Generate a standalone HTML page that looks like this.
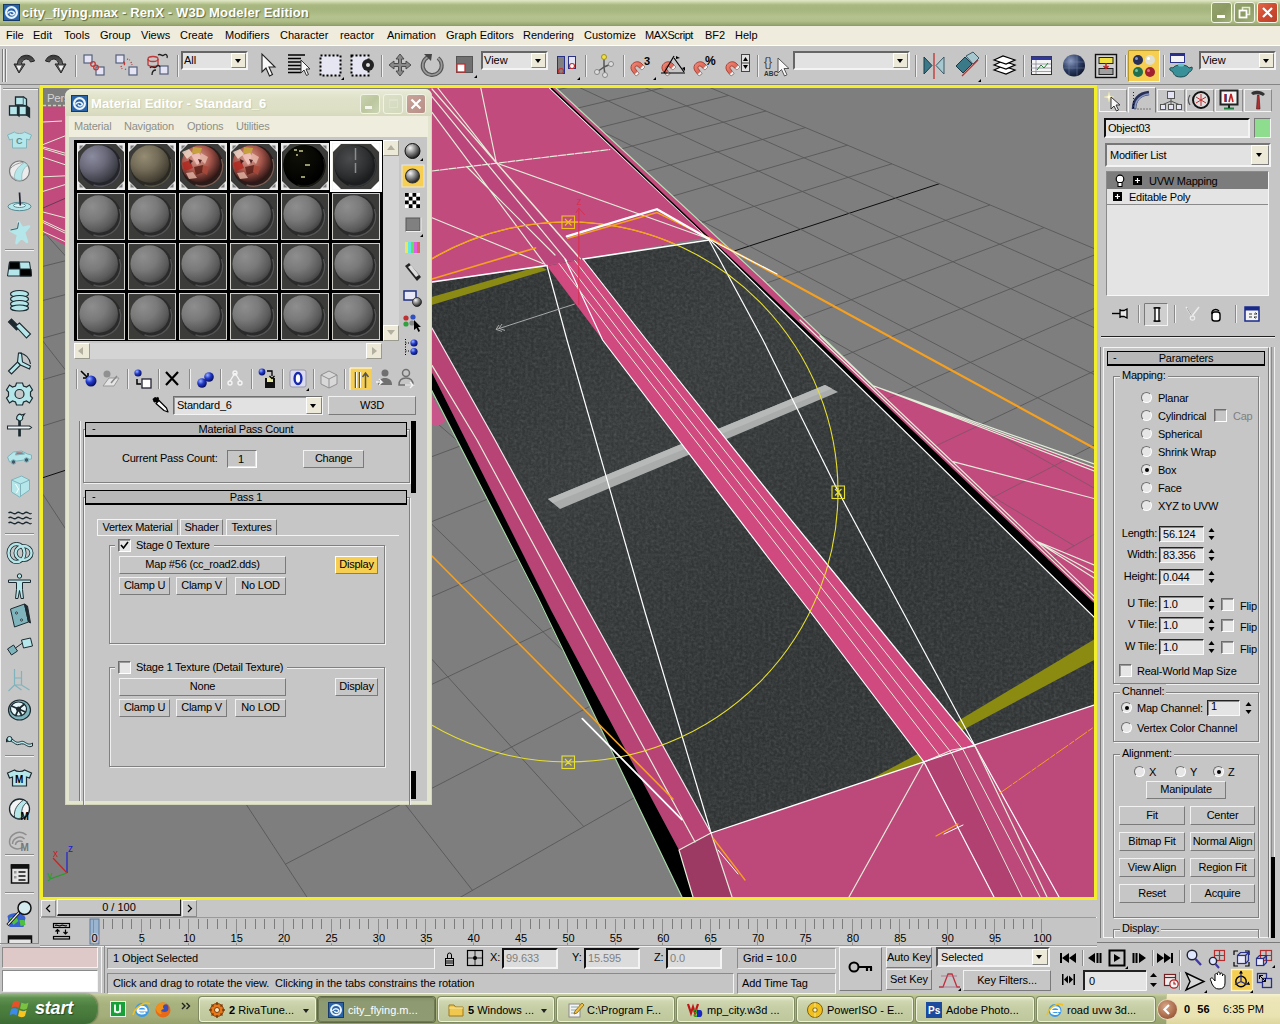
<!DOCTYPE html>
<html><head><meta charset="utf-8"><title>city_flying.max - RenX - W3D Modeler Edition</title>
<style>
*{box-sizing:border-box;margin:0;padding:0}
html,body{width:1280px;height:1024px;overflow:hidden;background:#c5c5c5;font-family:"Liberation Sans",sans-serif;font-size:11px;color:#000}
.a{position:absolute}
.t{position:absolute;white-space:nowrap;line-height:14px}
svg{position:absolute;overflow:visible}
#title{left:0;top:0;width:1280px;height:26px;background:linear-gradient(#e1e8c8 0,#cdd7ab 2px,#a8b880 5px,#a5b57d 9px,#b4c28f 17px,#b0be8a 21px,#9dac74 24px,#8a9a62 26px)}
#title .tt{left:22px;top:5px;font-weight:bold;font-size:13px;color:#fff;text-shadow:1px 1px 1px #5c6a3a;letter-spacing:.15px;line-height:16px}
.wb{position:absolute;top:2px;width:21px;height:21px;border:1px solid #f3f6e6;border-radius:3px;background:linear-gradient(135deg,#93a36b,#8b9b63 50%,#a0b078)}
.wb.cl{background:linear-gradient(135deg,#e0694a,#cf4a30 50%,#b8402c)}
#menu{left:0;top:26px;width:1280px;height:20px;background:#efecde;border-bottom:1px solid #fff}
#menu .t{top:2px;font-size:11px}
#tb{left:0;top:46px;width:1280px;height:39px;background:#c6c6c6}
.sep{position:absolute;width:2px;border-left:1px solid #8a8a8a;border-right:1px solid #e8e8e8}
.dd{position:absolute;background:#e2e2e2;border:1px solid;border-color:#6e6e6e #f4f4f4 #f4f4f4 #6e6e6e;box-shadow:inset 1px 1px 0 #9a9a9a}
.dd .t{left:4px;top:1px;font-size:11px}
.dd .ar{position:absolute;right:0;top:0;bottom:0;width:16px;background:#ece9d8;border:1px solid;border-color:#fff #808080 #808080 #fff}
.dd .ar:after{content:"";position:absolute;left:50%;margin-left:-4px;top:50%;margin-top:-2px;border:3.5px solid transparent;border-top:4px solid #000;border-bottom:0}
.btn{position:absolute;background:#c6c6c6;border:1px solid;border-color:#f2f2f2 #7a7a7a #7a7a7a #f2f2f2;text-align:center;font-size:11px;line-height:15px;white-space:nowrap}
.sunk{position:absolute;border:1px solid;border-color:#6e6e6e #f4f4f4 #f4f4f4 #6e6e6e}
.grp{position:absolute;border:1px solid;border-color:#7c7c7c #f2f2f2 #f2f2f2 #7c7c7c;box-shadow:inset 1px 1px 0 #f2f2f2,1px 1px 0 #7c7c7c}
.grp{border-color:#808080;box-shadow:inset 1px 1px 0 #f0f0f0,1px 1px 0 #f0f0f0}
.rh{position:absolute;height:15px;background:#b8b8b8;border:1px solid #000;border-width:1px 1px 2px 1px;text-align:center;font-size:11px;line-height:13px;white-space:nowrap}
.rh .mn{position:absolute;left:6px;top:-1px}
.tab{position:absolute;height:17px;border:1px solid;border-color:#f4f4f4 #7a7a7a transparent #f4f4f4;text-align:center;line-height:15px;font-size:11px;white-space:nowrap}
.cb{position:absolute;width:13px;height:13px;background:#e6e6e6;border:1px solid;border-color:#6e6e6e #fff #fff #6e6e6e;box-shadow:inset 1px 1px 0 #9a9a9a}
.rb{position:absolute;width:11px;height:11px;border-radius:50%;background:#e6e6e6;border:1px solid;border-color:#6e6e6e #fff #fff #6e6e6e}
.rb.on:after{content:"";position:absolute;left:2.5px;top:2.5px;width:4px;height:4px;border-radius:50%;background:#000}
#me,#cp{letter-spacing:-.22px}
</style></head><body>
<div id="title" class="a">
<svg style="left:3px;top:4px" width="17" height="17" viewBox="0 0 17 17"><rect width="17" height="17" fill="#173a6a"/><rect x="1" y="1" width="15" height="15" fill="#2a63a6"/><circle cx="8.5" cy="8.5" r="5.4" fill="none" stroke="#e8f4ff" stroke-width="2.2"/><path d="M4.5 9.5c1.5-3 6-3 7 0c-1 2-4 2-4.5 0" fill="none" stroke="#e8f4ff" stroke-width="1.6"/></svg>
<div class="t tt">city_flying.max - RenX - W3D Modeler Edition</div>
<div class="wb" style="left:1211px"><div class="a" style="left:5px;top:12px;width:8px;height:3px;background:#fff"></div></div>
<div class="wb" style="left:1234px"><svg style="left:3px;top:3px" width="13" height="13"><path d="M4.5 4V1.5h7v7H9" fill="none" stroke="#e6ecd2" stroke-width="1.6"/><rect x="1.5" y="4.5" width="7" height="7" fill="none" stroke="#fff" stroke-width="1.8"/></svg></div>
<div class="wb cl" style="left:1257px"><svg style="left:3px;top:3px" width="13" height="13"><path d="M2 2l9 9M11 2l-9 9" stroke="#fff" stroke-width="2.2"/></svg></div>
</div>
<div id="menu" class="a">
<div class="t" style="left:6px">File</div>
<div class="t" style="left:33px">Edit</div>
<div class="t" style="left:64px">Tools</div>
<div class="t" style="left:100px">Group</div>
<div class="t" style="left:141px">Views</div>
<div class="t" style="left:180px">Create</div>
<div class="t" style="left:225px">Modifiers</div>
<div class="t" style="left:280px">Character</div>
<div class="t" style="left:340px">reactor</div>
<div class="t" style="left:387px">Animation</div>
<div class="t" style="left:446px">Graph Editors</div>
<div class="t" style="left:523px">Rendering</div>
<div class="t" style="left:584px">Customize</div>
<div class="t" style="left:645px;letter-spacing:-.45px">MAXScript</div>
<div class="t" style="left:705px">BF2</div>
<div class="t" style="left:735px">Help</div>
</div>
<div id="tb" class="a"></div><div class="a" style="left:0;top:84px;width:1280px;height:1px;background:#858585"></div>
<svg style="left:0;top:46px" width="1280" height="39" viewBox="0 46 1280 39" font-family="Liberation Sans,sans-serif">
<defs><linearGradient id="ug" x1="0" y1="0" x2="0" y2="1"><stop offset="0" stop-color="#333"/><stop offset="1" stop-color="#999"/></linearGradient>
<radialGradient id="sph" cx=".35" cy=".3" r=".75"><stop offset="0" stop-color="#8a9ac0"/><stop offset=".6" stop-color="#2a3a60"/><stop offset="1" stop-color="#10182c"/></radialGradient>
<linearGradient id="mg" x1="0" y1="0" x2="1" y2="1"><stop offset="0" stop-color="#f09080"/><stop offset="1" stop-color="#d04030"/></linearGradient></defs>
<path d="M2.500 49v33M5.500 49v33" stroke="#7a7a7a"/><path d="M3.500 49v33M6.500 49v33" stroke="#f0f0f0"/>
<g stroke="#8a8a8a"><path d="M75.500 55v22M177.500 55v22M381.500 55v22M585.500 55v22M623.500 55v22M757.500 55v22M915.500 55v22M985.500 55v22M1023.500 55v22M1125.500 55v22M1163.500 55v22"/></g>
<g stroke="#f0f0f0"><path d="M76.500 55v22M178.500 55v22M382.500 55v22M586.500 55v22M624.500 55v22M758.500 55v22M916.500 55v22M986.500 55v22M1024.500 55v22M1126.500 55v22M1164.500 55v22"/></g>
<!-- undo / redo -->
<path d="M19 73l-5-9h3.500c0-10 14-12 17-3l-4 1c-2-5-9-3-9 2h3.500z" fill="url(#ug)" stroke="#222" stroke-width="1"/><path d="M15.500 65h7l-3.500 7z" fill="#f0f0f0" stroke="#222" stroke-width=".8"/>
<path d="M61 73l5-9h-3.500c0-10-14-12-17-3l4 1c2-5 9-3 9 2h-3.500z" fill="url(#ug)" stroke="#222" stroke-width="1"/><path d="M64.500 65h-7l3.500 7z" fill="#f0f0f0" stroke="#222" stroke-width=".8"/>
<!-- link -->
<g fill="#e4e4f4" stroke="#55607a" stroke-width="1.200"><rect x="84" y="55" width="8" height="8"/><rect x="96" y="67" width="8" height="8"/><rect x="116" y="55" width="8" height="8"/><rect x="129" y="67" width="8" height="8"/><rect x="160" y="66" width="8" height="8"/></g>
<g fill="none" stroke="#c03838" stroke-width="1.300"><circle cx="93" cy="64" r="2.300"/><circle cx="96" cy="67.500" r="2.300"/><path d="M123 62c2 0 2 2 1 3" /><path d="M127 59l3 1M131 62l1 3M121 66l1 3M125 69l2 1" stroke-dasharray="1.200 1.200"/><ellipse cx="153" cy="59" rx="5" ry="2.500"/><path d="M148 59v6c2 2 8 2 10 0v-6"/></g>
<path d="M158 55c3-2 4 2 6 0s4 1 3 3M150 68c2-3 4 1 6-1s3-2 4 0M152 75c0-4 2-5 4-5" fill="none" stroke="#222" stroke-width="1.300"/>
<!-- select arrow -->
<path d="M262 54v18l4-4l3.500 8l3-1.500l-3.500-7.500h6z" fill="#f8f8f8" stroke="#222" stroke-width="1.100"/>
<path d="M288 55h17M288 58.500h13M288 62h13M288 65.500h13M288 69h13M288 72.500h13" stroke="#000" stroke-width="1.300"/><path d="M301 60v13l3-3l2.500 5.500l2-1l-2.500-5.500h4z" fill="#f8f8f8" stroke="#333" stroke-width="1"/>
<rect x="320.500" y="55.500" width="20" height="20" fill="#e6e6f2" stroke="#000" stroke-width="2" stroke-dasharray="2 2"/><path d="M341 80l3 0l0-3z" fill="#000"/>
<rect x="351.500" y="55.500" width="17" height="20" fill="#e6e6f2" stroke="#000" stroke-width="2" stroke-dasharray="2 2"/><circle cx="368" cy="65" r="6" fill="#222"/><circle cx="368" cy="65" r="2" fill="#ddd"/>
<!-- move -->
<path d="M400 54l4 5h-2.500v4.500h4.500v-2.500l5 4l-5 4v-2.500h-4.500v4.500h2.500l-4 5l-4-5h2.500v-4.500h-4.500v2.500l-5-4l5-4v2.500h4.500v-4.500h-2.500z" fill="#8a8a8a" stroke="#444" stroke-width=".9"/>
<path d="M438 58a9.500 9.500 0 1 1-10 -1" fill="none" stroke="#555" stroke-width="4"/><path d="M438 58a9.500 9.500 0 1 1-10 -1" fill="none" stroke="#9a9a9a" stroke-width="1.600"/><path d="M424 54l8 0l-1 7z" fill="#444"/>
<rect x="456.500" y="56.500" width="16" height="16" fill="#707070" stroke="#555"/><rect x="457" y="64" width="8" height="8" fill="#fff" stroke="#c03030" stroke-width="1.300"/><path d="M474 78l3 0l0-3z" fill="#000"/>
<!-- pivot -->
<rect x="557.500" y="56.500" width="7" height="17" fill="#808080" stroke="#283088"/><rect x="568.500" y="56.500" width="7" height="12" fill="#e4e4f4" stroke="#283088"/><circle cx="561" cy="71" r="2.500" fill="none" stroke="#c03030" stroke-width="1.200"/><circle cx="572" cy="66" r="2.500" fill="#fff" stroke="#c03030" stroke-width="1.200"/><path d="M577 80l3 0l0-3z" fill="#000"/>
<path d="M604 57v10M604 67l-7 5M604 67l7 -3M604 67l1 8" stroke="#555" stroke-width="1.500"/><circle cx="604" cy="57" r="2.500" fill="#f0e040" stroke="#a09020"/><circle cx="597" cy="72" r="2.500" fill="#ddd" stroke="#888"/><circle cx="611" cy="64" r="2.500" fill="#ddd" stroke="#888"/><circle cx="605" cy="75" r="2.500" fill="#ddd" stroke="#888"/>
<!-- snaps (magnets) -->
<g id="mag"><path d="M636 76l-4-5c-4-6 4-12 9-8l4 4l-3 3l-4-3.500c-2-1.500-4 .5-2.500 2.500l3.500 4.500z" fill="url(#mg)" stroke="#a03020" stroke-width=".8"/><path d="M636 76l3-2.500l-1.500-2l-3 2.500zM645 67l-3 3l-1.800-1.800l3-3z" fill="#f4f4f4" stroke="#888" stroke-width=".6"/></g>
<use href="#mag" x="31"/><use href="#mag" x="63"/><use href="#mag" x="95"/>
<text x="644" y="65" font-size="11" font-weight="bold">3</text><path d="M653 80l3 0l0-3z" fill="#000"/>
<path d="M661 73h24M664 73l10-17M674 58l10 14" stroke="#000" stroke-width="1.200" fill="none"/><path d="M676 56l4 2l-4 1zM685 71l-3-3l3-1z" fill="#000"/>
<text x="705" y="65" font-size="12" font-weight="bold">%</text>
<rect x="741.500" y="54.500" width="8" height="17" fill="#e0e0e0" stroke="#444"/><path d="M743 61l2.500-4l2.500 4zM743 65l2.500 4l2.500-4z" fill="#000"/><path d="M742 63h7" stroke="#444"/>
<text x="764" y="66" font-size="12" fill="#444">{}</text><text x="764" y="76" font-size="6.500" font-weight="bold" fill="#333">ABC</text><path d="M778 58v15l3.500-3.500l3 6.500l2.500-1.200l-3-6.300h5z" fill="#f8f8f8" stroke="#555" stroke-width="1"/>
<!-- mirror, align -->
<path d="M924 57v17l8-8.500z" fill="#3a7a88" stroke="#1a3a48"/><path d="M944 57v17l-8-8.500z" fill="#a8c8d0" stroke="#3a5a68"/><path d="M934 53v26" stroke="#c03030" stroke-width="1.300"/>
<path d="M956 66l9-9l7 7l-9 9z" fill="#3a7a88" stroke="#1a3a48"/><path d="M966 56l7-4l6 6l-6 6z" fill="#a8c8d0" stroke="#3a5a68"/><path d="M962 76l16-16" stroke="#c03030" stroke-width="1.300"/><path d="M978 82l3 0l0-3z" fill="#000"/>
<g fill="#fff" stroke="#000" stroke-width="1.200"><path d="M994 70l9-4l12 4l-9 4z"/><path d="M994 65l9-4l12 4l-9 4z"/><path d="M994 60l9-4l12 4l-9 4z"/></g>
<rect x="1031.500" y="56.500" width="20" height="18" fill="#f4f4f4" stroke="#333"/><rect x="1031.500" y="56.500" width="20" height="3.500" fill="#3038a0"/><path d="M1036 60v14M1031 64h20M1031 68h20M1031 71.500h20" stroke="#889" stroke-width=".8"/><path d="M1037 70l4-5l3 3l4-5" stroke="#208030" fill="none"/>
<circle cx="1074" cy="65.500" r="11" fill="url(#sph)"/><path d="M1064 62h20M1063.500 68h21M1069 56v20M1077 55v21" stroke="#8090b0" stroke-width=".6" opacity=".7"/>
<rect x="1095.500" y="54.500" width="21" height="23" fill="#d0d0d0" stroke="#111" stroke-width="1.400"/><rect x="1099" y="57.500" width="14" height="6" fill="#f0e040" stroke="#222"/><rect x="1099" y="68.500" width="14" height="6" fill="#a0a0a0" stroke="#222"/><path d="M1106 63v5M1103.500 66l2.500 2.500l2.500-2.500" stroke="#c02020" stroke-width="1.500" fill="none"/>
<rect x="1128.500" y="50.500" width="31" height="31" fill="#f6cf52" stroke="#fff6d0"/><path d="M1128.500 81.500v-31h31" fill="none" stroke="#b89828"/>
<circle cx="1138" cy="60" r="5" fill="#283058"/><circle cx="1150" cy="60" r="5" fill="#e0e0d0"/><circle cx="1138" cy="72" r="5" fill="#207050"/><circle cx="1150" cy="72" r="5" fill="#a02030"/><circle cx="1136.500" cy="58.500" r="1.500" fill="#8898c8"/><circle cx="1148.500" cy="58.500" r="1.500" fill="#fff"/><circle cx="1136.500" cy="70.500" r="1.500" fill="#70c0a0"/><circle cx="1148.500" cy="70.500" r="1.500" fill="#e07080"/>
<rect x="1170.500" y="53.500" width="14" height="9" fill="#f4f4f4" stroke="#283088"/><rect x="1170.500" y="53.500" width="14" height="2.500" fill="#283088"/><path d="M1173 68c-2-1-4 0-3 2l3 2c1 4 4 5 8 5s7-2 8-5c2 0 4-3 3-5l-3 1c-1-2-4-3-8-3s-7 1-8 3z" fill="#3a9098" stroke="#184048" stroke-width=".9"/><ellipse cx="1181" cy="65" rx="3" ry="1.500" fill="#70c0c8"/>
</svg>
<div class="dd" style="left:181px;top:51px;width:67px;height:19px;border-width:2px;border-color:#666 #f4f4f4 #f4f4f4 #666;box-shadow:none"><div class="t" style="left:1px;top:0">All</div><div class="ar" style="width:15px"></div></div>
<div class="dd" style="left:481px;top:51px;width:67px;height:19px;border-width:2px;border-color:#666 #f4f4f4 #f4f4f4 #666;box-shadow:none"><div class="t" style="left:1px;top:0">View</div><div class="ar" style="width:15px"></div></div>
<div class="dd" style="left:793px;top:51px;width:117px;height:19px;border-width:2px;border-color:#666 #f4f4f4 #f4f4f4 #666;box-shadow:none"><div class="ar" style="width:15px"></div></div>
<div class="dd" style="left:1199px;top:51px;width:77px;height:19px;border-width:2px;border-color:#666 #f4f4f4 #f4f4f4 #666;box-shadow:none"><div class="t" style="left:1px;top:0">View</div><div class="ar" style="width:15px"></div></div>
<div class="a" style="left:0;top:85px;width:40px;height:860px;background:#c6c6c6"></div>
<div class="a" style="left:0;top:85px;width:1px;height:860px;background:#f0f0f0"></div>
<div class="a" style="left:38px;top:88px;width:1px;height:856px;background:#8a8a8a"></div>
<div class="a" style="left:3px;top:88px;width:35px;height:1px;background:#8a8a8a"></div>
<div class="a" style="left:3px;top:89px;width:35px;height:1px;background:#f4f4f4"></div>
<div class="a" style="left:0;top:943px;width:39px;height:1px;background:#8a8a8a"></div>
<svg style="left:0;top:85px" width="40" height="860" viewBox="0 85 40 860">
<defs><clipPath id="lc"><rect x="0" y="85" width="40" height="858"/></clipPath></defs><g clip-path="url(#lc)">
<g transform="translate(19.500,108)"><g stroke="#1c2a30" stroke-width="1.300" fill="#b4e6ea"><path d="M-4-11h8v8h-8z"/><path d="M4-11l3 2v8l-3-2"/><path d="M-10-2h8v9h-8z"/><path d="M-1-2h8v9h-8z"/><path d="M7-2l3 2v9l-3-2z" fill="#1c2a30"/><path d="M-2-2l1.500 1v9l-1.500-1" fill="#1c2a30"/></g></g>
<g transform="translate(19.500,140)"><g stroke="#7fb4bc" stroke-width="1" fill="#b4e6ea"><path d="M-5-8l-7 3l2 5l3-1v9h14v-9l3 1l2-5l-7-3c-2 2-8 2-10 0z"/></g><text x="-3.500" y="4" font-size="9" font-weight="bold" fill="#5a8a94" font-family="Liberation Sans,sans-serif">C</text></g>
<g transform="translate(19.500,171)"><circle r="10" fill="#ececec" stroke="#7a7a7a" stroke-width="1.200"/><path d="M5-8.500c-7 4-11 10-10 16c2.500 2 5 2.500 7.500 1.500c-1-6 1-12 6-15z" fill="#b4e6ea" stroke="#8aa" stroke-width=".6"/><path d="M-9.500-2c3-4 8-6 13-6.500" stroke="#999" fill="none"/><path d="M-8 5c0 0 3 4 8 5" stroke="#aaa" fill="none"/></g>
<g transform="translate(19.500,202)"><g stroke="#5a8a92" stroke-width="1" fill="#b4e6ea"><ellipse cx="0" cy="4.500" rx="11.500" ry="4.200"/><ellipse cx="0" cy="3.500" rx="6" ry="2" fill="#dff6f8"/></g><path d="M0-9.500l.8 13" stroke="#223" stroke-width="1.700"/></g>
<g transform="translate(19.500,232)"><path d="M-1-10l3.500 6l7-1.500l-5 6l3 9.500l-5.500-4.500l-5 5.500l1.500-8.500l-7.500-4l7.500-1.500z" fill="#b4e6ea" stroke="#b4e6ea" stroke-width="2.600" stroke-linejoin="round"/><path d="M-9-2l7-1.500l1-6" stroke="#3a5a62" stroke-width="1" fill="none"/></g>
<g transform="translate(19.500,269)"><g stroke="#1c2a30" stroke-width="1"><path d="M-10-7h20l2 14h-24z" fill="#b4e6ea"/><path d="M-10-7h10l.5 7h-11z" fill="#000"/><path d="M.5 0h11l.5 7h-11.500z" fill="#000"/></g></g>
<g transform="translate(19.500,300)"><g stroke="#1c2a30" stroke-width="1.200" fill="none"><ellipse cx="0" cy="-6" rx="9" ry="3.500" fill="#b4e6ea"/><ellipse cx="0" cy="-1" rx="9" ry="3.500" fill="#b4e6ea"/><ellipse cx="0" cy="4" rx="9" ry="3.500" fill="#b4e6ea"/><ellipse cx="0" cy="8" rx="9" ry="3" fill="#b4e6ea"/></g></g>
<g transform="translate(19.500,331)"><g stroke="#1c2a30" stroke-width="1.100" fill="#b4e6ea"><path d="M-11-9l3-3l8 8l-3 3z" fill="#1c2a30"/><path d="M-4-5l4-3l11 11l-4 4z"/></g></g>
<g transform="translate(19.500,363)"><g stroke="#1c2a30" stroke-width="1.100" fill="#b4e6ea"><path d="M-11 8l9-9l3 3l-9 9z"/><path d="M-2-1l1-9l3 0l1 9l8 4l-1 3l-9-4z"/><path d="M0-10c6 1 10 5 11 11" fill="none"/></g></g>
<g transform="translate(19.500,394)"><g stroke="#1c2a30" stroke-width="1.200" fill="#b4e6ea"><path d="M-3-11h6l1 3l3 1l3-2l3 5l-2 2v4l2 2l-3 5l-3-2l-3 1l-1 3h-6l-1-3l-3-1l-3 2l-3-5l2-2v-4l-2-2l3-5l3 2l3-1z"/><circle r="4.500" fill="#c6c6c6"/></g></g>
<g transform="translate(19.500,425)"><g stroke="#1c2a30" stroke-width="1.100" fill="#b4e6ea"><path d="M-.7-6h1.500v17h-1.500z" fill="#1c2a30"/><path d="M-12 1h22l2 1.500l-2 1.500h-22z" fill="#f4f4f4"/><path d="M-3-6c0-4 3-6 5-4l3-1l-2 3c1 2-1 4-3 4z"/></g></g>
<g transform="translate(19.500,456)"><g stroke="#7fb4bc" stroke-width="1" fill="#b4e6ea"><path d="M-12 1l6-5l8-1l6 3l4 1v4l-22 3z"/><circle cx="-6" cy="6" r="2.200" fill="#456"/><circle cx="7" cy="4" r="2.200" fill="#456"/><path d="M-3-4l5 0l3 2l-9 1z" fill="#d06060"/></g></g>
<g transform="translate(19.500,487)"><g stroke="#7fb4bc" stroke-width="1" fill="#b4e6ea"><path d="M-8-7l10-4l8 4v10l-10 7l-8-5z"/><path d="M-8-7l9 4l9-4M1-3v13" fill="none"/><path d="M-4-3l3 5l-2 4" fill="none" stroke="#fff"/></g></g>
<g transform="translate(19.500,518)"><g stroke="#1c2a30" stroke-width="1.300" fill="none"><path d="M-11-5c3-3 5 3 8 0s5 3 8 0s5 3 7 0M-11 0c3-3 5 3 8 0s5 3 8 0s5 3 7 0M-11 5c3-3 5 3 8 0s5 3 8 0s5 3 7 0"/></g></g>
<g transform="translate(19.500,553)"><g stroke="#1c2a30" stroke-width="1.200" fill="none"><ellipse cx="-3" cy="0" rx="8" ry="9" stroke="#1c2a30" stroke-width="4"/><ellipse cx="4" cy="0" rx="8" ry="7" stroke="#1c2a30" stroke-width="4"/><ellipse cx="-3" cy="0" rx="8" ry="9" stroke="#b4e6ea" stroke-width="2.400"/><ellipse cx="4" cy="0" rx="8" ry="7" stroke="#b4e6ea" stroke-width="2.400"/></g></g>
<g transform="translate(19.500,586)"><g stroke="#1c2a30" stroke-width="1" fill="#b4e6ea"><circle cx="0" cy="-10" r="2.200"/><path d="M-11-6h22v2.500h-8v7l1 9h-2.500l-1.500-8l-1.500 8h-2.500l1-9v-7h-8z"/></g></g>
<g transform="translate(19.500,616)"><g stroke="#1c2a30" stroke-width="1" fill="#7fb4bc"><path d="M-9-7l14-5l4 18l-14 5z"/><path d="M5-12l3 2l3 17l-2 -1z" fill="#1c2a30"/><circle cx="-3" cy="-3" r="1" fill="#fff"/><circle cx="2" cy="4" r="1" fill="#fff"/></g></g>
<g transform="translate(19.500,648)"><g stroke="#1c2a30" stroke-width="1" fill="#b4e6ea"><path d="M-12 1l6-4l4 6l-6 4z" fill="#7fb4bc"/><path d="M2-8l9-2l2 8l-9 2z"/><path d="M-4 0l7-5" fill="none"/></g></g>
<g transform="translate(19.500,680)"><g stroke="#7fb4bc" stroke-width="1.200" fill="none"><path d="M-5-11v16M2-9v14M-5 5l-6 6M2 5l8 5M-5 5h7M-5-2h7M-5 5l7 5"/></g></g>
<g transform="translate(19.500,710)"><g stroke="#1c2a30" stroke-width="1.200" fill="#7fb4bc"><ellipse cx="0" cy="0" rx="11" ry="10"/><ellipse cx="-1" cy="-1" rx="8" ry="7" fill="#e8f8fa"/><path d="M-1-1l-7-3M-1-1l6-5M-1-1l7 3M-1-1l-3 7M-1-1l3 6" stroke-width="1.800"/><circle cx="-1" cy="-1" r="2" fill="#1c2a30"/></g></g>
<g transform="translate(19.500,742)"><g stroke="#1c2a30" stroke-width="1" fill="#b4e6ea"><path d="M-13-3c4-3 7 2 10 3s5-2 8 0s5 3 8 1l0 3c-4 2-6-1-9-2s-5 2-8 0s-5-4-9-2z"/><circle cx="-10" cy="-3" r="2.500"/></g></g>
<g transform="translate(19.500,778)"><g stroke="#1c2a30" stroke-width="1.200" fill="#b4e6ea"><path d="M-5-8l-7 3l2 5l3-1v9h14v-9l3 1l2-5l-7-3c-2 2-8 2-10 0z"/></g><text x="-4.500" y="5" font-size="10" font-weight="bold" fill="#000" font-family="Liberation Sans,sans-serif">M</text></g>
<g transform="translate(19.500,809)"><circle r="10" fill="#f4f4f4" stroke="#1c2a30" stroke-width="1.300"/><path d="M4-9c-6 4-10 10-9 17c3 2 5 2 8 0c-2-6 0-12 5-15z" fill="#b4e6ea" stroke="#1c2a30" stroke-width=".8"/><text x="1" y="11" font-size="10" font-weight="bold" fill="#000" font-family="Liberation Sans,sans-serif">M</text></g>
<g transform="translate(19.500,840)"><g stroke="#8e8e8e" stroke-width="1.500" fill="none"><path d="M-10 2c0-8 10-13 17-7M-7 4c0-6 8-9 12-5M-4 5c0-4 5-5 7-3"/><path d="M-10 2c0 6 8 9 14 5"/></g><text x="1" y="11" font-size="10" font-weight="bold" fill="#777" font-family="Liberation Sans,sans-serif">M</text></g>
<g transform="translate(19.500,874)"><g stroke="#111" stroke-width="1.500" fill="#e4e4e4"><rect x="-8" y="-9" width="17" height="18"/><rect x="-8" y="-9" width="17" height="3" fill="#111"/><path d="M-1-2h7M-1 2h7M-1 6h7" stroke-width="1.300"/><rect x="-5.500" y="-3" width="2.500" height="2.500" fill="#999" stroke="none"/><rect x="-5.500" y="2" width="2.500" height="2.500" fill="#999" stroke="none"/></g></g>
<g transform="translate(19.500,914)"><path d="M-12 2c6-5 16-3 18 2l-2 9h-14z" fill="#3a60d0"/><path d="M-10 4l6-2l3 5l-5 4zM0 6l5 0l1 5l-5 1z" fill="#50c040"/><path d="M-12 11l12-13" stroke="#111" stroke-width="3"/><path d="M-11.500 10.500l11-12" stroke="#eee" stroke-width="1.200"/><circle cx="5" cy="-6" r="6.500" fill="#d4ecf0" stroke="#111" stroke-width="1.500"/></g>
<g transform="translate(19.500,940)"><g><rect x="-11" y="-4" width="23" height="9" fill="#e4e4e4" stroke="#111" stroke-width="1.500"/><rect x="-11" y="-4" width="23" height="3.500" fill="#111"/></g></g>
<path d="M5 249.5h29" stroke="#8a8a8a"/><path d="M5 250.5h29" stroke="#f4f4f4"/>
<path d="M5 533.5h29" stroke="#8a8a8a"/><path d="M5 534.5h29" stroke="#f4f4f4"/>
<path d="M5 755.5h29" stroke="#8a8a8a"/><path d="M5 756.5h29" stroke="#f4f4f4"/>
<path d="M5 854.5h29" stroke="#8a8a8a"/><path d="M5 855.5h29" stroke="#f4f4f4"/>
<path d="M5 892.5h29" stroke="#8a8a8a"/><path d="M5 893.5h29" stroke="#f4f4f4"/>
</g></svg>
<div class="a" style="left:40px;top:85px;width:1057px;height:815px;background:#f2ee2c"></div>
<svg style="left:43px;top:88px" width="1051" height="809" viewBox="43 88 1051 809"><defs><clipPath id="vc"><rect x="43" y="88" width="1051" height="809"/></clipPath>
<filter id="nz" x="0" y="0" width="100%" height="100%"><feTurbulence type="fractalNoise" baseFrequency="0.35" numOctaves="2" seed="3" result="n"/><feColorMatrix in="n" type="matrix" values="0 0 0 0 .55  0 0 0 0 .57  0 0 0 0 .57  .9 .9 .9 0 -1.05" result="m"/><feComposite in="m" in2="SourceGraphic" operator="in"/></filter>
<linearGradient id="rg" x1="0" y1="0" x2="1" y2="1"><stop offset="0" stop-color="#2b2f30"/><stop offset=".3" stop-color="#363a3b"/><stop offset=".6" stop-color="#2f3334"/><stop offset="1" stop-color="#323637"/></linearGradient>
<clipPath id="tri"><polygon points="874,386 1094,467 1094,607 1088,600"/></clipPath></defs><g clip-path="url(#vc)">
<rect x="43" y="88" width="1051" height="809" fill="#7e7e7e"/>
<g id="gridlines" stroke-width="0.9" fill="none"><path d="M659.8 66.6L-121.1 244.0" stroke="#585858"/><path d="M693.3 80.6L-104.0 270.1" stroke="#585858"/><path d="M728.6 95.4L-85.5 298.4" stroke="#585858"/><path d="M765.9 111.0L-65.5 328.9" stroke="#585858"/><path d="M805.5 127.6L-43.8 362.0" stroke="#585858"/><path d="M847.4 145.2L-20.2 398.0" stroke="#585858"/><path d="M892.0 163.8L5.7 437.4" stroke="#585858"/><path d="M939.4 183.7L34.0 480.6" stroke="#000"/><path d="M990.0 204.9L65.2 528.2" stroke="#585858"/><path d="M1044.1 227.6L99.7 580.9" stroke="#585858"/><path d="M1102.1 251.9L138.2 639.7" stroke="#585858"/><path d="M1164.3 278.0L181.4 705.5" stroke="#585858"/><path d="M1231.4 306.1L230.1 779.8" stroke="#585858"/><path d="M1303.8 336.4L285.4 864.2" stroke="#585858"/><path d="M1382.3 369.3L348.9 961.1" stroke="#585858"/><path d="M659.8 66.6L1382.3 369.3" stroke="#585858"/><path d="M618.5 75.9L1339.1 394.0" stroke="#585858"/><path d="M575.5 85.7L1293.1 420.4" stroke="#585858"/><path d="M530.7 95.9L1244.0 448.5" stroke="#585858"/><path d="M484.0 106.5L1191.3 478.6" stroke="#585858"/><path d="M435.3 117.6L1134.9 511.0" stroke="#585858"/><path d="M384.4 129.1L1074.1 545.8" stroke="#585858"/><path d="M331.2 141.2L1008.5 583.3" stroke="#585858"/><path d="M275.6 153.8L937.6 624.0" stroke="#585858"/><path d="M217.3 167.1L860.5 668.1" stroke="#585858"/><path d="M156.2 181.0L776.6 716.2" stroke="#585858"/><path d="M92.0 195.5L684.7 768.8" stroke="#585858"/><path d="M24.6 210.9L583.8 826.6" stroke="#585858"/><path d="M-46.4 227.0L472.5 890.4" stroke="#585858"/><path d="M-121.1 244.0L348.9 961.1" stroke="#585858"/></g>
<!-- left strip pink -->
<polygon points="43,106.500 66,106.500 66,246 43,233" fill="#c14b7d"/>
<!-- top pink region + right strip + right triangle -->
<polygon points="430,88 556,88 767.500,284 784,300 874,386.700 1094,467 1094,604 709,237 583,259 547,266 430,283" fill="#c14b7d"/>
<!-- road -->
<polygon points="430,283 547,266 583,259 709,239 1094,616 1094,705 711,833 589,612 495,440 430,324.500" fill="url(#rg)"/>
<polygon points="430,283 547,266 583,259 709,239 1094,616 1094,705 711,833 589,612 495,440 430,324.500" fill="#888" filter="url(#nz)" opacity=".16"/>
<!-- right black band -->
<polygon points="709,237 1094,603 1094,616.500 709,239" fill="#000"/>
<!-- bottom pink -->
<polygon points="711,833 1094,705 1094,897 694,897 679,850" fill="#bc497a"/>
<!-- left curb -->
<polygon points="430,324.500 432,328 495,440 589,612 711,833 679,850 552,612 465.800,440 430,368.700" fill="#b84476"/>
<polygon points="679,850 711,833 732,897 693,897" fill="#9c3a64"/>
<!-- left black band -->
<polygon points="430,368.700 465.800,440 552,612 679,850 693,897 682,897 538.400,600 457,440 430,386.900" fill="#000"/><polygon points="430,392 446,421 438,426 430,424" fill="#c9568a"/>
<!-- yellow stripes -->
<polygon points="430,297.500 430,305.500 547,270 540,266" fill="#8a8a14"/>
<polygon points="867,781 924,762 924,750 962,718.500 1094,639.500 1094,660" fill="#8b8b12"/>
<!-- white road marking -->
<polygon points="548,499 825,385 838,392 560,509" fill="#a9acab"/>
<polygon points="548,499 825,385 832,388.500 553,503" fill="#b6b9b8"/>
<!-- median -->
<polygon points="547,266 583,259 646.500,340 770,494 866,612 975,746 924,762 810.500,612 770,560 602.600,340" fill="#d04a80"/>
<polygon points="924,762 952,750 1022,897 994,897" fill="#b04170"/>
<!-- darker median continuation in top pink -->
<polygon points="430,95 430,110 545,265 567,261 580,259" fill="#bb467b"/>
<!-- grid over right pink triangle -->
<g clip-path="url(#tri)" opacity=".55" stroke="#3c3c3c" stroke-width=".9" fill="none"><use href="#gridlines"/></g>
<!-- wireframe light lines -->
<g stroke="#e4ecda" stroke-width="1.200" fill="none" stroke-linecap="round">
<path d="M432 89L578.4 257M432 96.700L566.700 260.800M432 112.300L545.200 264.700M437.800 88L498.400 165L580.400 258.800M480.800 88L496.400 163M467 167L555 255"/>
<path d="M432 171L609.700 149.500" stroke-dasharray="7 1.500"/>
<path d="M496.400 163L709 239M432 217.800L543.300 263.700"/>
<path d="M547 266L567 340L645 612L711 833" stroke="#fff"/>
<path d="M709 240L763 340L838 491L903 612L975 746" stroke="#fff"/>
<path d="M583 259L646.500 340L770 494L866 612L975 746L1059 897" stroke="#fff"/>
<path d="M565 259L602.600 340L770 560L810.500 612L924 762L994 897" stroke="#fff"/>
<path d="M559 263.500L617 340L828.800 612L940.800 757M566.400 262L626.300 340L840.500 612L951.500 753L1022 897M574.700 260.500L636.400 340L853.200 612L963.300 750L1040 897" stroke-width="1"/>
<path d="M924 762L952 750L975 746M924 762L849 897M975 746L1047 897"/>
<!-- left curb lines -->
<path d="M432 328L495 440L589 612L711 833" stroke="#f4e4ea"/><path d="M432 365.400L477 440L570 612L695 842"/>
<path d="M430 387L457 440L538 598L682 897" stroke="#a8d8a8"/>
<path d="M679 850L711 833M679 850L693 897M711 833L732 897"/>
<!-- right edge lines -->
<path d="M549.500 88L709 239L1094 617" stroke="#fff"/><path d="M556 88L767.500 284L784 300L874 386.700" stroke="#b8e0b8"/>
<path d="M874 386L1094 464M874 386L1094 467.700M874 386L1094 471M953 461.600L1094 498.500M1036 541L1094 565M1036 541L1094 572.600M1036 541L1094 578M800 320L1094 600M820 336L1094 596"/>
<path d="M711 833L1094 705" stroke="#fff" stroke-width="1.300"/>
<path d="M432 282L547 265.500M583 259L709 240" stroke="#fff" stroke-width="1.600"/>
</g>
<!-- black line along right edge upper part -->
<path d="M551 88L709 238" stroke="#000" stroke-width="1.600"/>
<!-- orange -->
<g fill="none" stroke="#f5a020" stroke-linecap="round">

<path d="M432 279L535.500 248" stroke-width="1.800"/>
<path d="M567.700 238.300L657 212.500L709 238" stroke-width="1.500"/>
<path d="M709 238L1094 448" stroke-width="2.200"/>
<path d="M432 556L673 799" stroke-width="1.600"/>
<path d="M713 838L745 880" stroke-width="1.300"/><path d="M1000 793L1094 727" stroke-width="1" stroke-dasharray="14 2 5 2"/><path d="M936 836L958 824" stroke-width="1.200"/>
</g>
<!-- yellow gizmo circle -->
<circle cx="568" cy="492" r="270" fill="none" stroke="#e8e030" stroke-width="1.100"/><path d="M420 266A270 270 0 0 1 674.400 243.800" fill="none" stroke="#f5a020" stroke-width="1.400"/>
<g fill="none" stroke="#f0c020" stroke-width="1.100"><rect x="562" y="216" width="12.500" height="12.500"/><path d="M565 219l6.500 6.500M571.500 219l-6.500 6.500"/></g>
<g fill="none" stroke="#e8e030" stroke-width="1.100"><rect x="832" y="486" width="12.500" height="12.500"/><path d="M835 489l6.500 6.500M841.500 489l-6.500 6.500M838 488v9"/><rect x="562" y="756" width="12.500" height="12.500"/><path d="M565 759l6.500 6.500M571.500 759l-6.500 6.500"/></g>
<!-- white thick selection -->
<g fill="none" stroke="#fff" stroke-linecap="round"><path d="M566.800 236.400L657 209.300L709 239" stroke-width="2.200"/><path d="M709 239L777 274" stroke-width="1.200"/>
<path d="M582.300 718.600L681.900 819.600" stroke-width="1.800"/><path d="M718 850L738 874" stroke-width="1"/><path d="M944 834L963 825" stroke-width="1"/></g>
<!-- axes -->
<path d="M578.800 208V305" stroke="#d83050" stroke-width="1.100"/><path d="M578.800 208l-3 5M578.800 208l6 7" stroke="#d83050" stroke-width="1"/>
<path d="M574.800 304L496.400 329.400" stroke="#a8a8a8" stroke-width="1"/><path d="M499 325l-3 4.400l6 2M502 324l-3 4.400l6 2" stroke="#a8a8a8" stroke-width="1" fill="none"/>
<text x="576.500" y="205" font-size="10" fill="#d83050" font-family="Liberation Sans,sans-serif">z</text>
<!-- axis tripod bottom-left -->
<g stroke-width="1.200" fill="none"><path d="M67 873V852" stroke="#2020d0"/><path d="M67 873L53 858" stroke="#d02020"/><path d="M67 873L50 879" stroke="#20a020"/></g>
<g font-size="10" font-family="Liberation Sans,sans-serif"><text x="68" y="852" fill="#2020d0">z</text><text x="53" y="857" fill="#d02020">x</text><text x="47" y="879" fill="#20a020">y</text></g>
<g stroke="#e6ead8" stroke-width="1" fill="none"><path d="M43 105.500H66" stroke="#b8e0a0" stroke-dasharray="3 2" stroke-width="1.500"/><path d="M43 122L62 121M43 144.600L66 135.500M43 147L66 153.400M43 148.500L66 155.500M43 157.300L66 165M43 176.800L66 175.800M43 191.400L66 184.300M43 212L66 218M43 220.700L66 231.500M43 222.500L66 233.500M43 231.500L66 242"/></g>
<path d="M43 208L66 198" stroke="#5a3a4a" stroke-width=".9"/>

</g>
<text x="47" y="102" font-size="11.5" fill="#d4d4d4" font-family="Liberation Sans,sans-serif" letter-spacing="-.3">Perspective</text>
</svg>
<div id="me" class="a" style="left:65px;top:89px;width:367px;height:716px;background:#e3e5cf;border-radius:7px 7px 0 0;box-shadow:inset 0 0 0 1px #d2d5b9;overflow:hidden">
<div class="a" style="left:0;top:0;width:367px;height:27px;border-radius:7px 7px 0 0;background:linear-gradient(#eef0e0 0,#e6e8d3 3px,#dfe2c8 10px,#dde0c5 20px,#d6d9bc 27px)"></div>
<svg style="left:6px;top:6px" width="17" height="17" viewBox="0 0 17 17"><rect width="17" height="17" fill="#173a6a"/><rect x="1" y="1" width="15" height="15" fill="#2a63a6"/><circle cx="8.5" cy="8.500" r="5.400" fill="none" stroke="#e8f4ff" stroke-width="2.200"/><path d="M4.500 9.500c1.500-3 6-3 7 0c-1 2-4 2-4.500 0" fill="none" stroke="#e8f4ff" stroke-width="1.600"/></svg>
<div class="t" style="left:26px;top:7px;font-weight:bold;font-size:13px;color:#fff;letter-spacing:.1px;line-height:16px;text-shadow:1px 1px 1px #c8ccb0">Material Editor - Standard_6</div>
<div class="a" style="left:295px;top:5px;width:20px;height:20px;border:1px solid #f1f3e4;border-radius:3px;background:linear-gradient(135deg,#c9d3b0,#bcc79f 50%,#cbd4b3)">
<div class="a" style="left:4px;top:11px;width:7px;height:3px;background:#f4f6ea"></div>
</div>
<div class="a" style="left:318px;top:5px;width:20px;height:20px;border:1px solid #f1f3e4;border-radius:3px;background:linear-gradient(135deg,#dadfc6,#d3d9bd)">
<div class="a" style="left:5px;top:4px;width:9px;height:9px;border:1px solid #dfe3cd;border-top-width:2px"></div>
</div>
<div class="a" style="left:341px;top:5px;width:20px;height:20px;border:1px solid #f1f3e4;border-radius:3px;background:linear-gradient(135deg,#c9a29b,#bf9990 50%,#b98f88)">
<svg style="left:3px;top:3px" width="12" height="12"><path d="M1.500 1.500l9 9M10.500 1.500l-9 9" stroke="#fff" stroke-width="2.200"/></svg>
</div>
<div class="a" style="left:4px;top:27px;width:359px;height:21px;background:#efeede"></div>
<div class="t" style="left:9px;top:30px;color:#8e8e88;font-size:11px">Material</div>
<div class="t" style="left:59px;top:30px;color:#8e8e88;font-size:11px">Navigation</div>
<div class="t" style="left:122px;top:30px;color:#8e8e88;font-size:11px">Options</div>
<div class="t" style="left:171px;top:30px;color:#8e8e88;font-size:11px">Utilities</div>
<div class="a" style="left:4px;top:48px;width:358px;height:664px;background:#c6c6c6"></div>
<div class="a" style="left:9px;top:51px;width:309px;height:201px;background:#000"></div>
<svg style="left:0;top:0" width="367" height="716"><defs>
<radialGradient id="sg" cx=".33" cy=".3" r=".8"><stop offset="0" stop-color="#8e8e8e"/><stop offset=".45" stop-color="#7a7a7a"/><stop offset=".8" stop-color="#5a5a5a"/><stop offset="1" stop-color="#3c3c3c"/></radialGradient>
<radialGradient id="sg0" cx=".33" cy=".3" r=".8"><stop offset="0" stop-color="#8c8ca0"/><stop offset=".45" stop-color="#6a6a7a"/><stop offset=".8" stop-color="#44444e"/><stop offset="1" stop-color="#2c2c32"/></radialGradient>
<radialGradient id="sg1" cx=".36" cy=".3" r=".8"><stop offset="0" stop-color="#968c74"/><stop offset=".45" stop-color="#746c58"/><stop offset=".8" stop-color="#4a4538"/><stop offset="1" stop-color="#302c24"/></radialGradient>
<radialGradient id="sg2" cx=".4" cy=".35" r=".7"><stop offset="0" stop-color="#d9a79a"/><stop offset=".5" stop-color="#a8574c"/><stop offset=".85" stop-color="#4a2420"/><stop offset="1" stop-color="#201010"/></radialGradient>
<radialGradient id="sg4" cx=".4" cy=".3" r=".75"><stop offset="0" stop-color="#101008"/><stop offset="1" stop-color="#000"/></radialGradient>
<radialGradient id="sg5" cx=".4" cy=".35" r=".75"><stop offset="0" stop-color="#4a4c4e"/><stop offset=".6" stop-color="#2e3032"/><stop offset="1" stop-color="#181818"/></radialGradient>
</defs>
<rect x="12.5" y="54.5" width="47" height="46" fill="#3b3b39" stroke="#f0f0e8" stroke-width="1"/>
<path d="M12.5 54.5l9 0l-9 9z" fill="#e8e8e8"/>
<path d="M14.5 56.5l4 0l-4 4z" fill="#7c7c7c"/>
<path d="M59.5 54.5l-9 0l9 9z" fill="#e8e8e8"/>
<path d="M57.5 56.5l-4 0l4 4z" fill="#7c7c7c"/>
<path d="M12.5 100.5l9 0l-9 -9z" fill="#e8e8e8"/>
<path d="M14.5 98.5l4 0l-4 -4z" fill="#7c7c7c"/>
<path d="M59.5 100.5l-9 0l9 -9z" fill="#e8e8e8"/>
<path d="M57.5 98.5l-4 0l4 -4z" fill="#7c7c7c"/>
<circle cx="35.5" cy="77.0" r="21" fill="#24242a"/>
<path d="M28.5 96.0a20.250 20.250 0 0 0 26 -26" fill="none" stroke="#5a5a62" stroke-width="1.400" opacity=".8"/>
<ellipse cx="33.7" cy="75.0" rx="19.300" ry="18.800" fill="url(#sg0)"/>
<rect x="63.5" y="54.5" width="47" height="46" fill="#3b3b39" stroke="#f0f0e8" stroke-width="1"/>
<path d="M63.5 54.5l9 0l-9 9z" fill="#e8e8e8"/>
<path d="M65.5 56.5l4 0l-4 4z" fill="#7c7c7c"/>
<path d="M110.5 54.5l-9 0l9 9z" fill="#e8e8e8"/>
<path d="M108.5 56.5l-4 0l4 4z" fill="#7c7c7c"/>
<path d="M63.5 100.5l9 0l-9 -9z" fill="#e8e8e8"/>
<path d="M65.5 98.5l4 0l-4 -4z" fill="#7c7c7c"/>
<path d="M110.5 100.5l-9 0l9 -9z" fill="#e8e8e8"/>
<path d="M108.5 98.5l-4 0l4 -4z" fill="#7c7c7c"/>
<circle cx="86.5" cy="77.0" r="21" fill="#2a2822"/>
<path d="M79.5 96.0a20.250 20.250 0 0 0 26 -26" fill="none" stroke="#5e5a4c" stroke-width="1.400" opacity=".8"/>
<ellipse cx="84.7" cy="75.0" rx="19.300" ry="18.800" fill="url(#sg1)"/>
<rect x="114.5" y="54.5" width="47" height="46" fill="#3b3b39" stroke="#f0f0e8" stroke-width="1"/>
<path d="M114.5 54.5l9 0l-9 9z" fill="#e8e8e8"/>
<path d="M116.5 56.5l4 0l-4 4z" fill="#7c7c7c"/>
<path d="M161.5 54.5l-9 0l9 9z" fill="#e8e8e8"/>
<path d="M159.5 56.5l-4 0l4 4z" fill="#7c7c7c"/>
<path d="M114.5 100.5l9 0l-9 -9z" fill="#e8e8e8"/>
<path d="M116.5 98.5l4 0l-4 -4z" fill="#7c7c7c"/>
<path d="M161.5 100.5l-9 0l9 -9z" fill="#e8e8e8"/>
<path d="M159.5 98.5l-4 0l4 -4z" fill="#7c7c7c"/>
<circle cx="137.5" cy="77.0" r="21" fill="#2a1a18"/>
<path d="M130.5 96.0a20.250 20.250 0 0 0 26 -26" fill="none" stroke="#8a6a60" stroke-width="1.400" opacity=".8"/>
<ellipse cx="135.7" cy="75.0" rx="19.300" ry="18.800" fill="url(#sg2)"/>
<rect x="165.5" y="54.5" width="47" height="46" fill="#3b3b39" stroke="#f0f0e8" stroke-width="1"/>
<path d="M165.5 54.5l9 0l-9 9z" fill="#e8e8e8"/>
<path d="M167.5 56.5l4 0l-4 4z" fill="#7c7c7c"/>
<path d="M212.5 54.5l-9 0l9 9z" fill="#e8e8e8"/>
<path d="M210.5 56.5l-4 0l4 4z" fill="#7c7c7c"/>
<path d="M165.5 100.5l9 0l-9 -9z" fill="#e8e8e8"/>
<path d="M167.5 98.5l4 0l-4 -4z" fill="#7c7c7c"/>
<path d="M212.5 100.5l-9 0l9 -9z" fill="#e8e8e8"/>
<path d="M210.5 98.5l-4 0l4 -4z" fill="#7c7c7c"/>
<circle cx="188.5" cy="77.0" r="21" fill="#2a1a18"/>
<path d="M181.5 96.0a20.250 20.250 0 0 0 26 -26" fill="none" stroke="#8a6a60" stroke-width="1.400" opacity=".8"/>
<ellipse cx="186.7" cy="75.0" rx="19.300" ry="18.800" fill="url(#sg2)"/>
<rect x="216.5" y="54.5" width="47" height="46" fill="#3b3b39" stroke="#f0f0e8" stroke-width="1"/>
<path d="M216.5 54.5l9 0l-9 9z" fill="#e8e8e8"/>
<path d="M218.5 56.5l4 0l-4 4z" fill="#7c7c7c"/>
<path d="M263.5 54.5l-9 0l9 9z" fill="#e8e8e8"/>
<path d="M261.5 56.5l-4 0l4 4z" fill="#7c7c7c"/>
<path d="M216.5 100.5l9 0l-9 -9z" fill="#e8e8e8"/>
<path d="M218.5 98.5l4 0l-4 -4z" fill="#7c7c7c"/>
<path d="M263.5 100.5l-9 0l9 -9z" fill="#e8e8e8"/>
<path d="M261.5 98.5l-4 0l4 -4z" fill="#7c7c7c"/>
<circle cx="239.5" cy="77.0" r="21" fill="#000"/>
<path d="M232.5 96.0a20.250 20.250 0 0 0 26 -26" fill="none" stroke="#202018" stroke-width="1.400" opacity=".8"/>
<ellipse cx="237.7" cy="75.0" rx="19.300" ry="18.800" fill="url(#sg4)"/>
<rect x="265" y="52" width="52" height="51" fill="#fff"/>
<rect x="267.5" y="54.5" width="47" height="46" fill="#3b3b39" stroke="#f0f0e8" stroke-width="1"/>
<path d="M267.5 54.5l9 0l-9 9z" fill="#fff"/>
<path d="M314.5 54.5l-9 0l9 9z" fill="#fff"/>
<path d="M267.5 100.5l9 0l-9 -9z" fill="#fff"/>
<path d="M314.5 100.5l-9 0l9 -9z" fill="#fff"/>
<circle cx="290.5" cy="77.0" r="21" fill="#1c1d1e"/>
<path d="M283.5 96.0a20.250 20.250 0 0 0 26 -26" fill="none" stroke="#3a3c3e" stroke-width="1.400" opacity=".8"/>
<ellipse cx="288.7" cy="75.0" rx="19.300" ry="18.800" fill="url(#sg5)"/>
<rect x="12.5" y="104.5" width="47" height="46" fill="#3b3b39" stroke="#d0d0c8" stroke-width="1"/>
<circle cx="35.5" cy="127.0" r="21" fill="#2a2a2a"/>
<path d="M28.5 146.0a20.250 20.250 0 0 0 26 -26" fill="none" stroke="#5e5e5e" stroke-width="1.400" opacity=".8"/>
<ellipse cx="33.7" cy="125.0" rx="19.300" ry="18.800" fill="url(#sg)"/>
<rect x="63.5" y="104.5" width="47" height="46" fill="#3b3b39" stroke="#d0d0c8" stroke-width="1"/>
<circle cx="86.5" cy="127.0" r="21" fill="#2a2a2a"/>
<path d="M79.5 146.0a20.250 20.250 0 0 0 26 -26" fill="none" stroke="#5e5e5e" stroke-width="1.400" opacity=".8"/>
<ellipse cx="84.7" cy="125.0" rx="19.300" ry="18.800" fill="url(#sg)"/>
<rect x="114.5" y="104.5" width="47" height="46" fill="#3b3b39" stroke="#d0d0c8" stroke-width="1"/>
<circle cx="137.5" cy="127.0" r="21" fill="#2a2a2a"/>
<path d="M130.5 146.0a20.250 20.250 0 0 0 26 -26" fill="none" stroke="#5e5e5e" stroke-width="1.400" opacity=".8"/>
<ellipse cx="135.7" cy="125.0" rx="19.300" ry="18.800" fill="url(#sg)"/>
<rect x="165.5" y="104.5" width="47" height="46" fill="#3b3b39" stroke="#d0d0c8" stroke-width="1"/>
<circle cx="188.5" cy="127.0" r="21" fill="#2a2a2a"/>
<path d="M181.5 146.0a20.250 20.250 0 0 0 26 -26" fill="none" stroke="#5e5e5e" stroke-width="1.400" opacity=".8"/>
<ellipse cx="186.7" cy="125.0" rx="19.300" ry="18.800" fill="url(#sg)"/>
<rect x="216.5" y="104.5" width="47" height="46" fill="#3b3b39" stroke="#d0d0c8" stroke-width="1"/>
<circle cx="239.5" cy="127.0" r="21" fill="#2a2a2a"/>
<path d="M232.5 146.0a20.250 20.250 0 0 0 26 -26" fill="none" stroke="#5e5e5e" stroke-width="1.400" opacity=".8"/>
<ellipse cx="237.7" cy="125.0" rx="19.300" ry="18.800" fill="url(#sg)"/>
<rect x="267.5" y="104.5" width="47" height="46" fill="#3b3b39" stroke="#d0d0c8" stroke-width="1"/>
<circle cx="290.5" cy="127.0" r="21" fill="#2a2a2a"/>
<path d="M283.5 146.0a20.250 20.250 0 0 0 26 -26" fill="none" stroke="#5e5e5e" stroke-width="1.400" opacity=".8"/>
<ellipse cx="288.7" cy="125.0" rx="19.300" ry="18.800" fill="url(#sg)"/>
<rect x="12.5" y="154.5" width="47" height="46" fill="#3b3b39" stroke="#d0d0c8" stroke-width="1"/>
<circle cx="35.5" cy="177.0" r="21" fill="#2a2a2a"/>
<path d="M28.5 196.0a20.250 20.250 0 0 0 26 -26" fill="none" stroke="#5e5e5e" stroke-width="1.400" opacity=".8"/>
<ellipse cx="33.7" cy="175.0" rx="19.300" ry="18.800" fill="url(#sg)"/>
<rect x="63.5" y="154.5" width="47" height="46" fill="#3b3b39" stroke="#d0d0c8" stroke-width="1"/>
<circle cx="86.5" cy="177.0" r="21" fill="#2a2a2a"/>
<path d="M79.5 196.0a20.250 20.250 0 0 0 26 -26" fill="none" stroke="#5e5e5e" stroke-width="1.400" opacity=".8"/>
<ellipse cx="84.7" cy="175.0" rx="19.300" ry="18.800" fill="url(#sg)"/>
<rect x="114.5" y="154.5" width="47" height="46" fill="#3b3b39" stroke="#d0d0c8" stroke-width="1"/>
<circle cx="137.5" cy="177.0" r="21" fill="#2a2a2a"/>
<path d="M130.5 196.0a20.250 20.250 0 0 0 26 -26" fill="none" stroke="#5e5e5e" stroke-width="1.400" opacity=".8"/>
<ellipse cx="135.7" cy="175.0" rx="19.300" ry="18.800" fill="url(#sg)"/>
<rect x="165.5" y="154.5" width="47" height="46" fill="#3b3b39" stroke="#d0d0c8" stroke-width="1"/>
<circle cx="188.5" cy="177.0" r="21" fill="#2a2a2a"/>
<path d="M181.5 196.0a20.250 20.250 0 0 0 26 -26" fill="none" stroke="#5e5e5e" stroke-width="1.400" opacity=".8"/>
<ellipse cx="186.7" cy="175.0" rx="19.300" ry="18.800" fill="url(#sg)"/>
<rect x="216.5" y="154.5" width="47" height="46" fill="#3b3b39" stroke="#d0d0c8" stroke-width="1"/>
<circle cx="239.5" cy="177.0" r="21" fill="#2a2a2a"/>
<path d="M232.5 196.0a20.250 20.250 0 0 0 26 -26" fill="none" stroke="#5e5e5e" stroke-width="1.400" opacity=".8"/>
<ellipse cx="237.7" cy="175.0" rx="19.300" ry="18.800" fill="url(#sg)"/>
<rect x="267.5" y="154.5" width="47" height="46" fill="#3b3b39" stroke="#d0d0c8" stroke-width="1"/>
<circle cx="290.5" cy="177.0" r="21" fill="#2a2a2a"/>
<path d="M283.5 196.0a20.250 20.250 0 0 0 26 -26" fill="none" stroke="#5e5e5e" stroke-width="1.400" opacity=".8"/>
<ellipse cx="288.7" cy="175.0" rx="19.300" ry="18.800" fill="url(#sg)"/>
<rect x="12.5" y="204.5" width="47" height="46" fill="#3b3b39" stroke="#d0d0c8" stroke-width="1"/>
<circle cx="35.5" cy="227.0" r="21" fill="#2a2a2a"/>
<path d="M28.5 246.0a20.250 20.250 0 0 0 26 -26" fill="none" stroke="#5e5e5e" stroke-width="1.400" opacity=".8"/>
<ellipse cx="33.7" cy="225.0" rx="19.300" ry="18.800" fill="url(#sg)"/>
<rect x="63.5" y="204.5" width="47" height="46" fill="#3b3b39" stroke="#d0d0c8" stroke-width="1"/>
<circle cx="86.5" cy="227.0" r="21" fill="#2a2a2a"/>
<path d="M79.5 246.0a20.250 20.250 0 0 0 26 -26" fill="none" stroke="#5e5e5e" stroke-width="1.400" opacity=".8"/>
<ellipse cx="84.7" cy="225.0" rx="19.300" ry="18.800" fill="url(#sg)"/>
<rect x="114.5" y="204.5" width="47" height="46" fill="#3b3b39" stroke="#d0d0c8" stroke-width="1"/>
<circle cx="137.5" cy="227.0" r="21" fill="#2a2a2a"/>
<path d="M130.5 246.0a20.250 20.250 0 0 0 26 -26" fill="none" stroke="#5e5e5e" stroke-width="1.400" opacity=".8"/>
<ellipse cx="135.7" cy="225.0" rx="19.300" ry="18.800" fill="url(#sg)"/>
<rect x="165.5" y="204.5" width="47" height="46" fill="#3b3b39" stroke="#d0d0c8" stroke-width="1"/>
<circle cx="188.5" cy="227.0" r="21" fill="#2a2a2a"/>
<path d="M181.5 246.0a20.250 20.250 0 0 0 26 -26" fill="none" stroke="#5e5e5e" stroke-width="1.400" opacity=".8"/>
<ellipse cx="186.7" cy="225.0" rx="19.300" ry="18.800" fill="url(#sg)"/>
<rect x="216.5" y="204.5" width="47" height="46" fill="#3b3b39" stroke="#d0d0c8" stroke-width="1"/>
<circle cx="239.5" cy="227.0" r="21" fill="#2a2a2a"/>
<path d="M232.5 246.0a20.250 20.250 0 0 0 26 -26" fill="none" stroke="#5e5e5e" stroke-width="1.400" opacity=".8"/>
<ellipse cx="237.7" cy="225.0" rx="19.300" ry="18.800" fill="url(#sg)"/>
<rect x="267.5" y="204.5" width="47" height="46" fill="#3b3b39" stroke="#d0d0c8" stroke-width="1"/>
<circle cx="290.5" cy="227.0" r="21" fill="#2a2a2a"/>
<path d="M283.5 246.0a20.250 20.250 0 0 0 26 -26" fill="none" stroke="#5e5e5e" stroke-width="1.400" opacity=".8"/>
<ellipse cx="288.7" cy="225.0" rx="19.300" ry="18.800" fill="url(#sg)"/>
<g transform="translate(0,0)" opacity=".85"><path d="M117 63l7-3l4 5l-6 5z" fill="#f0d8c8"/><path d="M128 58l9 1l-2 6l-8-1z" fill="#c8a838"/><path d="M126 66l8-2l5 7l-7 5z" fill="#f4c4bc"/><path d="M117 74l8-3l3 8l-8 3z" fill="#b02820"/><path d="M129 78l9-2l1 7l-8 3z" fill="#5a2018"/><path d="M136 64l7 4l-3 7l-5-5z" fill="#e8b8a8"/><path d="M121 84l7-1l4 6l-8 1z" fill="#e0b0a0"/><path d="M138 76l6 2l-2 8l-5-3z" fill="#a84838"/><path d="M124 70l4 2l-3 3z" fill="#301010"/><path d="M133 70l4 1l-2 4z" fill="#401818"/></g>
<g transform="translate(51,0)" opacity=".85"><path d="M117 63l7-3l4 5l-6 5z" fill="#f0d8c8"/><path d="M128 58l9 1l-2 6l-8-1z" fill="#c8a838"/><path d="M126 66l8-2l5 7l-7 5z" fill="#f4c4bc"/><path d="M117 74l8-3l3 8l-8 3z" fill="#b02820"/><path d="M129 78l9-2l1 7l-8 3z" fill="#5a2018"/><path d="M136 64l7 4l-3 7l-5-5z" fill="#e8b8a8"/><path d="M121 84l7-1l4 6l-8 1z" fill="#e0b0a0"/><path d="M138 76l6 2l-2 8l-5-3z" fill="#a84838"/><path d="M124 70l4 2l-3 3z" fill="#301010"/><path d="M133 70l4 1l-2 4z" fill="#401818"/></g>
<path d="M229 61h3M234 62h4M231 66h2M240 76h5M236 88h4" stroke="#c8c890" stroke-width="1.500"/><path d="M290.500 59v12M290.500 74v10" stroke="#8a8c8e" stroke-width="1.500"/>
</svg>
<div class="a" style="left:318px;top:51px;width:16px;height:201px;background:#d4d4d4"></div>
<div class="a" style="left:318px;top:51px;width:16px;height:16px;background:#ece9d8;border:1px solid;border-color:#fff #9a9a90 #9a9a90 #fff"><div class="a" style="left:3px;top:4px;border:4px solid transparent;border-bottom:5px solid #b4b0a0;border-top:0"></div></div>
<div class="a" style="left:318px;top:236px;width:16px;height:16px;background:#ece9d8;border:1px solid;border-color:#fff #9a9a90 #9a9a90 #fff"><div class="a" style="left:3px;top:4px;border:4px solid transparent;border-top:5px solid #b4b0a0;border-bottom:0"></div></div>
<div class="a" style="left:9px;top:254px;width:308px;height:16px;background:#d4d4d4"></div>
<div class="a" style="left:9px;top:254px;width:16px;height:16px;background:#ece9d8;border:1px solid;border-color:#fff #9a9a90 #9a9a90 #fff"><div class="a" style="left:3px;top:3px;border:4px solid transparent;border-right:5px solid #b4b0a0;border-left:0"></div></div>
<div class="a" style="left:301px;top:254px;width:16px;height:16px;background:#ece9d8;border:1px solid;border-color:#fff #9a9a90 #9a9a90 #fff"><div class="a" style="left:5px;top:3px;border:4px solid transparent;border-left:5px solid #b4b0a0;border-right:0"></div></div>
<!-- right icon column (coords relative to window 65,89) -->
<svg style="left:0;top:0" width="367" height="716">
<defs><radialGradient id="ib" cx=".35" cy=".3" r=".7"><stop offset="0" stop-color="#9ab4ff"/><stop offset=".5" stop-color="#2238c8"/><stop offset="1" stop-color="#081060"/></radialGradient>
<radialGradient id="ig" cx=".35" cy=".3" r=".7"><stop offset="0" stop-color="#f4f4f4"/><stop offset=".5" stop-color="#8a8a8a"/><stop offset="1" stop-color="#222"/></radialGradient></defs>
<circle cx="347.500" cy="62" r="7.500" fill="url(#ig)" stroke="#111" stroke-width="1"/><path d="M355 72l3 0l0-3z" fill="#000"/>
<rect x="337" y="76" width="22" height="22" fill="#f6cf52" stroke="#e8e8e8" stroke-width="1"/><circle cx="347.500" cy="87" r="7" fill="url(#ig)" stroke="#333" stroke-width="1.200"/>
<g fill="#000"><rect x="340" y="104" width="15" height="15" fill="#fff"/><rect x="340" y="104" width="3.750" height="3.750"/><rect x="347.500" y="104" width="3.750" height="3.750"/><rect x="343.750" y="107.750" width="3.750" height="3.750"/><rect x="351.250" y="107.750" width="3.750" height="3.750"/><rect x="340" y="111.500" width="3.750" height="3.750"/><rect x="347.500" y="111.500" width="3.750" height="3.750"/><rect x="343.750" y="115.250" width="3.750" height="3.750"/><rect x="351.250" y="115.250" width="3.750" height="3.750"/></g>
<rect x="341" y="129" width="14" height="13" fill="#808080" stroke="#555" stroke-width="1"/><path d="M341 142.500h15v-14" fill="none" stroke="#eee"/><path d="M355 148l3 0l0-3z" fill="#000"/>
<g><rect x="340" y="153" width="3" height="11" fill="#e8e860"/><rect x="343" y="153" width="3" height="11" fill="#60e8e8"/><rect x="346" y="153" width="3" height="11" fill="#60e060"/><rect x="349" y="153" width="3" height="11" fill="#e060e0"/><rect x="352" y="153" width="3" height="11" fill="#e06060"/></g>
<path d="M340 177l4-3l12 14l-4 4z" fill="#222"/><path d="M343 178l3-2l8 10l-3 2z" fill="#ddd"/>
<rect x="339" y="202" width="12" height="9" fill="#e8e8f8" stroke="#203080" stroke-width="1.500"/><circle cx="352" cy="213" r="4.500" fill="url(#ig)" stroke="#222" stroke-width=".8"/>
<circle cx="341" cy="229" r="2.600" fill="#c03030"/><circle cx="348" cy="228" r="2.600" fill="#3050c0"/><circle cx="341" cy="235" r="2.600" fill="#30a040"/><circle cx="347" cy="234" r="2.600" fill="#888"/><path d="M349 231l0 10l2.500-2l2 4l1.500-1l-2-4l3 0z" fill="#000"/>
<path d="M340.500 250v16M340.500 254h4M340.500 262h4" stroke="#000" stroke-dasharray="1 1.500" fill="none"/><circle cx="349" cy="254" r="3.600" fill="url(#ib)"/><circle cx="349" cy="262.500" r="3.600" fill="url(#ib)"/>
<!-- toolbar row y=366..392 => rel 277..303 -->
<g stroke="#8a8a8a"><path d="M11.500 280v20M62.500 280v20M93.500 280v20M124.500 280v20M155.500 280v20M186.500 280v20M217.500 280v20M248.500 280v20M279.500 280v20"/></g>
<g stroke="#f0f0f0"><path d="M12.500 280v20M63.500 280v20M94.500 280v20M125.500 280v20M156.500 280v20M187.500 280v20M218.500 280v20M249.500 280v20M280.500 280v20"/></g>
<path d="M16 282l7 7M23 284v5h-5" stroke="#000" stroke-width="1.600" fill="none"/><circle cx="26" cy="292" r="5.500" fill="url(#ib)"/>
<circle cx="42" cy="285" r="3.500" fill="#909090"/><path d="M38 297l6-8h10l-5 8z" fill="#e4e4e4" stroke="#999"/><path d="M46 294l6-7" stroke="#888" stroke-width="1.500"/>
<circle cx="73" cy="284" r="3.600" fill="url(#ib)"/><rect x="77" y="290" width="9" height="9" fill="#fff" stroke="#223" stroke-width="1.300"/><path d="M72 290v5h4" stroke="#000" stroke-width="1.500" fill="none"/>
<path d="M101 283l12 13M113 283l-12 13" stroke="#000" stroke-width="2.200"/>
<circle cx="137" cy="294" r="4.800" fill="url(#ib)"/><circle cx="144" cy="288" r="4.800" fill="url(#ib)"/>
<g stroke="#f4f4f4" fill="none" stroke-width="1.400"><path d="M170 284l-5 8M170 284l5 8"/><circle cx="170" cy="284" r="2"/><circle cx="165" cy="294" r="2"/><circle cx="175" cy="294" r="2"/></g>
<circle cx="197" cy="283" r="3.400" fill="url(#ib)"/><rect x="200" y="289" width="10" height="10" fill="#111"/><rect x="202" y="289" width="6" height="4" fill="#e8e8a0"/><path d="M202 282h5v5M204.500 287l2.500 2.500l2.500-2.500" stroke="#000" fill="none" stroke-width="1.300"/>
<rect x="225" y="281" width="16" height="17" rx="2" fill="#dcdcf0" stroke="#99a"/><ellipse cx="233" cy="289.500" rx="3.400" ry="5.500" fill="#fff" stroke="#1828b0" stroke-width="2.400"/><path d="M241 302l3 0l0-3z" fill="#000"/>
<g stroke="#909090" fill="#d8d8d8" stroke-width="1"><path d="M256 286l8-4l8 4v9l-8 4l-8-4z"/><path d="M256 286l8 4l8-4M264 290v9" fill="none"/></g>
<rect x="284.500" y="279" width="22" height="22" fill="#f6cf52"/><path d="M285 301v-22h22" stroke="#fff" fill="none"/><path d="M290.500 283v16M294.500 283v16M300.500 285v14M297.500 288l3-4l3 4" stroke="#555" stroke-width="1.500" fill="none"/><path d="M291.500 283v16M295.500 283v16" stroke="#fff" stroke-width="1"/>
<g fill="#707070"><circle cx="320" cy="284" r="3.500"/><path d="M313 296c0-5 3-7 7-7s7 2 7 7z"/></g><path d="M311 293h6l-3-3M317 293l-3 3" stroke="#f4f4f4" stroke-width="1.400" fill="none"/>
<g fill="none" stroke="#707070" stroke-width="1.500"><circle cx="341" cy="284" r="3.500"/><path d="M334 296c0-5 3-7 7-7s7 2 7 7z"/></g><path d="M340 296h8l-3-3M348 296l-3 3" stroke="#f4f4f4" stroke-width="1.400" fill="none"/>
<!-- eyedropper -->
<path d="M87.500 310l2.500-2l3 1l1.500 2.500l-1 1.500l-2 .5l-3-1z" fill="#000"/><path d="M91 314.500l3-3l7.500 7.500l1.500 4l-4-1.500z" fill="#fff" stroke="#000" stroke-width="1.200" stroke-linejoin="round"/><path d="M89 313l4.500-4.500" stroke="#000" stroke-width="2"/>
</svg>
<div class="dd" style="left:108px;top:307px;width:150px;height:19px"><div class="t" style="top:1px;left:3px">Standard_6</div><div class="ar"></div></div>
<div class="btn" style="left:263px;top:307px;width:88px;height:19px;line-height:16px">W3D</div>
<!-- rollouts -->
<div class="a" style="left:14px;top:332px;width:336px;height:380px;border-left:1px solid #7a7a7a;box-shadow:inset 1px 0 0 #f0f0f0"></div>
<div class="a" style="left:346px;top:332px;width:5px;height:72px;background:#000"></div>
<div class="a" style="left:346px;top:682px;width:5px;height:28px;background:#000"></div>
<div class="grp" style="left:18px;top:340px;width:327px;height:54px"></div>
<div class="rh" style="left:20px;top:333px;width:322px"><span class="mn">-</span>Material Pass Count</div>
<div class="t" style="left:57px;top:362px">Current Pass Count:</div>
<div class="sunk" style="left:162px;top:361px;width:30px;height:18px;border-color:#777 #fff #fff #777;box-shadow:inset -1px -1px 0 #e6e6e6"><div class="t" style="left:10px;top:1px">1</div></div>
<div class="btn" style="left:238px;top:361px;width:61px;height:18px">Change</div>
<div class="grp" style="left:18px;top:408px;width:327px;height:310px;border-bottom:0"></div>
<div class="rh" style="left:20px;top:401px;width:322px"><span class="mn">-</span>Pass 1</div>
<div class="tab" style="left:32px;top:430px;width:81px">Vertex Material</div>
<div class="tab" style="left:115px;top:430px;width:43px">Shader</div>
<div class="tab" style="left:161px;top:430px;width:51px">Textures</div>
<div class="a" style="left:32px;top:446px;width:302px;height:1px;background:#f4f4f4"></div>
<div class="grp" style="left:44px;top:456px;width:276px;height:99px"></div>
<div class="t" style="left:50px;top:449px;background:#c6c6c6;padding:0 4px 0 21px">Stage 0 Texture</div>
<div class="cb" style="left:53px;top:450px"><svg width="11" height="11" style="left:0;top:0"><path d="M2 5l2.500 3l4.500-6" stroke="#000" stroke-width="1.600" fill="none"/></svg></div>
<div class="btn" style="left:54px;top:467px;width:167px;height:18px">Map #56 (cc_road2.dds)</div>
<div class="btn" style="left:270px;top:467px;width:43px;height:18px;background:#f6cf52;border-color:#fff #a08020 #a08020 #fff">Display</div>
<div class="btn" style="left:54px;top:488px;width:51px;height:18px">Clamp U</div>
<div class="btn" style="left:111px;top:488px;width:51px;height:18px">Clamp V</div>
<div class="btn" style="left:170px;top:488px;width:51px;height:18px">No LOD</div>
<div class="grp" style="left:44px;top:578px;width:276px;height:100px"></div>
<div class="t" style="left:50px;top:571px;background:#c6c6c6;padding:0 4px 0 21px">Stage 1 Texture (Detail Texture)</div>
<div class="cb" style="left:53px;top:572px"></div>
<div class="btn" style="left:54px;top:589px;width:167px;height:18px">None</div>
<div class="btn" style="left:270px;top:589px;width:43px;height:18px">Display</div>
<div class="btn" style="left:54px;top:610px;width:51px;height:18px">Clamp U</div>
<div class="btn" style="left:111px;top:610px;width:51px;height:18px">Clamp V</div>
<div class="btn" style="left:170px;top:610px;width:51px;height:18px">No LOD</div>

</div>
<div id="cp" class="a" style="left:1097px;top:85px;width:183px;height:858px;background:#c6c6c6;overflow:hidden">
<div class="a" style="left:2px;top:4px;width:28px;height:23px;border:1px solid;border-color:#f0f0f0 #8a8a8a #f6f6f6 #f0f0f0"></div>
<div class="a" style="left:31px;top:2px;width:28px;height:26px;border:1px solid;border-color:#f6f6f6 #7a7a7a transparent #f6f6f6;background:#c6c6c6"></div>
<div class="a" style="left:60px;top:4px;width:28px;height:23px;border:1px solid;border-color:#f0f0f0 #8a8a8a #f6f6f6 #f0f0f0"></div>
<div class="a" style="left:89px;top:4px;width:28px;height:23px;border:1px solid;border-color:#f0f0f0 #8a8a8a #f6f6f6 #f0f0f0"></div>
<div class="a" style="left:118px;top:4px;width:28px;height:23px;border:1px solid;border-color:#f0f0f0 #8a8a8a #f6f6f6 #f0f0f0"></div>
<div class="a" style="left:147px;top:4px;width:28px;height:23px;border:1px solid;border-color:#f0f0f0 #8a8a8a #f6f6f6 #f0f0f0"></div>
<svg style="left:0;top:0" width="183" height="30" viewBox="1097 85 183 30">
<path d="M1109 92l1 4l4 1l-4 1l-1 4l-1-4l-4-1l4-1z" fill="#fffbe0" stroke="#e8e0a0" stroke-width=".5"/><path d="M1111 97v12l3-3l2.500 5l2-1l-2.500-5h4z" fill="#f8f8f8" stroke="#333" stroke-width="1"/>
<path d="M1134 109c0-9 5-15 15-16" fill="none" stroke="#283058" stroke-width="4.500"/><path d="M1135 109c0-8 5-14 14-15" fill="none" stroke="#8898c0" stroke-width="1.600"/><path d="M1133.500 92v17h17" fill="none" stroke="#000" stroke-dasharray="1 2" stroke-width=".8"/>
<g fill="#e4e4f4" stroke="#555" stroke-width="1"><rect x="1167.500" y="91.500" width="7" height="7"/><rect x="1160.500" y="104.500" width="5" height="5"/><rect x="1168.500" y="104.500" width="5" height="5"/><rect x="1176.500" y="104.500" width="5" height="5"/></g><path d="M1171 98.500v6M1171 101l-8 3.500M1171 101l8 3.500" stroke="#555" fill="none"/>
<circle cx="1201" cy="100" r="8" fill="#e0e0e0" stroke="#111" stroke-width="2"/><path d="M1201 94v12M1196 97l10 6M1196 103l10-6" stroke="#c03030" stroke-width="1"/><path d="M1190 95c-2 3-2 7 0 10" fill="none" stroke="#555" stroke-width="1.200"/>
<rect x="1220.500" y="90.500" width="17" height="14" fill="#f4f4f4" stroke="#222" stroke-width="2"/><path d="M1225 102v-8M1229 102l2-8l2 8" stroke="#c02020" stroke-width="1.600" fill="none"/><path d="M1226 94v8" stroke="#2030a0" stroke-width="1.600"/><path d="M1224 108.500h10" stroke="#208040" stroke-width="2"/><path d="M1229 105v3" stroke="#222" stroke-width="2"/>
<path d="M1251 93c3-3 10-3 14 1l-2 2c-3-2-7-2-10-1z" fill="#333"/><path d="M1257.500 95l1.500 0l1 14l-3.500 0z" fill="#b03030" stroke="#501010" stroke-width=".6"/>
</svg>

<div class="a" style="left:7px;top:33px;width:146px;height:20px;background:#e4e4e4;border:2px solid;border-color:#111 #f4f4f4 #f4f4f4 #111"><div class="t" style="left:2px;top:1px">Object03</div></div>
<div class="a" style="left:157px;top:33px;width:17px;height:20px;background:#8edc8e;border:1px solid;border-color:#7a7a7a #f4f4f4 #f4f4f4 #7a7a7a"></div>
<div class="dd" style="left:8px;top:58px;width:166px;height:24px;border-width:2px;border-color:#777 #f4f4f4 #f4f4f4 #777;box-shadow:none"><div class="t" style="left:3px;top:3px;font-size:11px">Modifier List</div><div class="ar" style="width:18px"></div></div>
<div class="a" style="left:9px;top:86px;width:163px;height:125px;background:#e4e4e4;border:1px solid;border-color:#8a8a8a #f8f8f8 #f8f8f8 #8a8a8a"></div>
<div class="a" style="left:10px;top:87px;width:161px;height:17px;background:#7c7c7c"></div>
<div class="a" style="left:10px;top:119px;width:161px;height:1px;background:#8a8a8a"></div>
<svg style="left:0;top:0" width="183" height="240"><circle cx="23" cy="94" r="3.800" fill="#fff" stroke="#000" stroke-width="1.200"/><rect x="21" y="97.500" width="4" height="4" fill="#fff" stroke="#000" stroke-width="1"/><rect x="36" y="91" width="9" height="9" fill="#000"/><path d="M38 95.500h5M40.500 93v5" stroke="#fff" stroke-width="1.200"/><rect x="16" y="107" width="9" height="9" fill="#000"/><path d="M18 111.500h5M20.500 109v5" stroke="#fff" stroke-width="1.200"/></svg>
<div class="t" style="left:52px;top:89px;">UVW Mapping</div>
<div class="t" style="left:32px;top:105px;">Editable Poly</div>
<svg style="left:0;top:218px" width="183" height="24"><g stroke="#8a8a8a"><path d="M41.500 2v18M77.500 2v18M138.500 2v18"/></g><g stroke="#f0f0f0"><path d="M42.500 2v18M78.500 2v18M139.500 2v18"/></g><path d="M15 10.500h9" stroke="#000" stroke-width="1.400"/><path d="M23 6v9M23 7.500h4l3-1.500v9l-3-1.500h-4z" stroke="#000" fill="#e8e8e8" stroke-width="1.300"/><rect x="47.500" y=".5" width="23" height="22" fill="#cfcfcf" stroke="#f4f4f4"/><path d="M47.500 22.500v-22h23" stroke="#7a7a7a" fill="none"/><path d="M56.500 5h7M56.500 18h7" stroke="#000" stroke-width="1.400"/><rect x="58" y="5" width="4" height="13" fill="#fff" stroke="#000" stroke-width="1.300"/><path d="M89 4l6 9l7-9" stroke="#ececec" fill="none" stroke-width="1.500"/><path d="M90 5l5 8" stroke="#a0a0a0" fill="none"/><circle cx="95.500" cy="15" r="2.200" fill="none" stroke="#ececec" stroke-width="1.200"/><rect x="115" y="9" width="8" height="9" rx="2.500" fill="#fff" stroke="#000" stroke-width="1.400"/><path d="M115 11c-1-4 4-6 7-3" stroke="#000" fill="none" stroke-width="1.300"/><rect x="148" y="4" width="14" height="14" fill="#f4f4f4" stroke="#1a2a8a" stroke-width="1.500"/><rect x="148" y="4" width="14" height="3.500" fill="#1a2a8a"/><path d="M152 11h3M152 14h3M157 11h3l-1.500-1.500M160 14h-3l1.500 1.500" stroke="#333" fill="none"/></svg>
<div class="a" style="left:4px;top:251px;width:174px;height:2px;background:#222;border-bottom:1px solid #eee"></div>
<div class="a" style="left:3px;top:262px;width:1px;height:591px;background:#7a7a7a"></div>
<div class="a" style="left:6px;top:262px;width:166px;height:591px;border:1px solid;border-color:#f4f4f4 #7a7a7a #f4f4f4 #f4f4f4"></div>
<div class="a" style="left:172px;top:262px;width:1px;height:591px;background:#f0f0f0"></div>
<div class="a" style="left:174px;top:262px;width:4px;height:591px;background:#b4b4b4;border-left:1px solid #8a8a8a;border-right:1px solid #f0f0f0"></div>
<div class="a" style="left:174px;top:772px;width:4px;height:81px;background:#000"></div>
<div class="rh" style="left:10px;top:266px;width:158px"><span class="mn" style="left:5px">-</span>Parameters</div>
<div class="grp" style="left:16px;top:291px;width:146px;height:308px"></div>
<div class="t" style="left:23px;top:283px;background:#c6c6c6;padding:0 2px">Mapping:</div>
<div class="rb" style="left:44px;top:307px"></div>
<div class="t" style="left:61px;top:306px;">Planar</div>
<div class="rb" style="left:44px;top:325px"></div>
<div class="t" style="left:61px;top:324px;">Cylindrical</div>
<div class="rb" style="left:44px;top:343px"></div>
<div class="t" style="left:61px;top:342px;">Spherical</div>
<div class="rb" style="left:44px;top:361px"></div>
<div class="t" style="left:61px;top:360px;">Shrink Wrap</div>
<div class="rb on" style="left:44px;top:379px"></div>
<div class="t" style="left:61px;top:378px;">Box</div>
<div class="rb" style="left:44px;top:397px"></div>
<div class="t" style="left:61px;top:396px;">Face</div>
<div class="rb" style="left:44px;top:415px"></div>
<div class="t" style="left:61px;top:414px;">XYZ to UVW</div>
<div class="cb" style="left:117px;top:324px;background:#c6c6c6;"></div>
<div class="t" style="left:136px;top:324px;color:#808080">Cap</div>
<div class="a" style="left:62px;top:441px;width:45px;height:16px;background:#e4e4e4;border:1px solid;border-color:#222 #f8f8f8 #f8f8f8 #222;box-shadow:inset 1px 1px 0 #888"><div class="t" style="left:3px;top:0">56.124</div></div>
<svg style="left:109px;top:441px" width="11" height="16"><path d="M2.500 6l3-4l3 4zM2.500 10l3 4l3-4z" fill="#000"/></svg>
<div class="t" style="left:0px;top:441px;width:60px;text-align:right">Length:</div>
<div class="a" style="left:62px;top:462px;width:45px;height:16px;background:#e4e4e4;border:1px solid;border-color:#222 #f8f8f8 #f8f8f8 #222;box-shadow:inset 1px 1px 0 #888"><div class="t" style="left:3px;top:0">83.356</div></div>
<svg style="left:109px;top:462px" width="11" height="16"><path d="M2.500 6l3-4l3 4zM2.500 10l3 4l3-4z" fill="#000"/></svg>
<div class="t" style="left:0px;top:462px;width:60px;text-align:right">Width:</div>
<div class="a" style="left:62px;top:484px;width:45px;height:16px;background:#e4e4e4;border:1px solid;border-color:#222 #f8f8f8 #f8f8f8 #222;box-shadow:inset 1px 1px 0 #888"><div class="t" style="left:3px;top:0">0.044</div></div>
<svg style="left:109px;top:484px" width="11" height="16"><path d="M2.500 6l3-4l3 4zM2.500 10l3 4l3-4z" fill="#000"/></svg>
<div class="t" style="left:0px;top:484px;width:60px;text-align:right">Height:</div>
<div class="a" style="left:62px;top:511px;width:45px;height:16px;background:#e4e4e4;border:1px solid;border-color:#222 #f8f8f8 #f8f8f8 #222;box-shadow:inset 1px 1px 0 #888"><div class="t" style="left:3px;top:0">1.0</div></div>
<svg style="left:109px;top:511px" width="11" height="16"><path d="M2.500 6l3-4l3 4zM2.500 10l3 4l3-4z" fill="#000"/></svg>
<div class="t" style="left:0px;top:511px;width:60px;text-align:right">U Tile:</div>
<div class="cb" style="left:124px;top:513px;"></div>
<div class="t" style="left:143px;top:514px;">Flip</div>
<div class="a" style="left:62px;top:532px;width:45px;height:16px;background:#e4e4e4;border:1px solid;border-color:#222 #f8f8f8 #f8f8f8 #222;box-shadow:inset 1px 1px 0 #888"><div class="t" style="left:3px;top:0">1.0</div></div>
<svg style="left:109px;top:532px" width="11" height="16"><path d="M2.500 6l3-4l3 4zM2.500 10l3 4l3-4z" fill="#000"/></svg>
<div class="t" style="left:0px;top:532px;width:60px;text-align:right">V Tile:</div>
<div class="cb" style="left:124px;top:534px;"></div>
<div class="t" style="left:143px;top:535px;">Flip</div>
<div class="a" style="left:62px;top:554px;width:45px;height:16px;background:#e4e4e4;border:1px solid;border-color:#222 #f8f8f8 #f8f8f8 #222;box-shadow:inset 1px 1px 0 #888"><div class="t" style="left:3px;top:0">1.0</div></div>
<svg style="left:109px;top:554px" width="11" height="16"><path d="M2.500 6l3-4l3 4zM2.500 10l3 4l3-4z" fill="#000"/></svg>
<div class="t" style="left:0px;top:554px;width:60px;text-align:right">W Tile:</div>
<div class="cb" style="left:124px;top:556px;"></div>
<div class="t" style="left:143px;top:557px;">Flip</div>
<div class="cb" style="left:22px;top:579px;"></div>
<div class="t" style="left:40px;top:579px;">Real-World Map Size</div>
<div class="grp" style="left:16px;top:607px;width:146px;height:50px"></div>
<div class="t" style="left:23px;top:599px;background:#c6c6c6;padding:0 2px">Channel:</div>
<div class="rb on" style="left:24px;top:617px"></div>
<div class="t" style="left:40px;top:616px;">Map Channel:</div>
<div class="a" style="left:110px;top:615px;width:33px;height:16px;background:#e4e4e4;border:1px solid;border-color:#222 #f8f8f8 #f8f8f8 #222;box-shadow:inset 1px 1px 0 #888"><div class="t" style="left:3px;top:-2px">1</div></div>
<svg style="left:146px;top:615px" width="11" height="16"><path d="M2.500 6l3-4l3 4zM2.500 10l3 4l3-4z" fill="#000"/></svg>
<div class="rb" style="left:24px;top:637px"></div>
<div class="t" style="left:40px;top:636px;">Vertex Color Channel</div>
<div class="grp" style="left:16px;top:669px;width:146px;height:164px"></div>
<div class="t" style="left:23px;top:661px;background:#c6c6c6;padding:0 2px">Alignment:</div>
<div class="rb" style="left:37px;top:681px"></div>
<div class="t" style="left:52px;top:680px;">X</div>
<div class="rb" style="left:78px;top:681px"></div>
<div class="t" style="left:93px;top:680px;">Y</div>
<div class="rb on" style="left:116px;top:681px"></div>
<div class="t" style="left:131px;top:680px;">Z</div>
<div class="btn" style="left:49px;top:696px;width:80px;height:18px;line-height:15px">Manipulate</div>
<div class="btn" style="left:22px;top:721px;width:66px;height:19px;line-height:16px">Fit</div>
<div class="btn" style="left:93px;top:721px;width:65px;height:19px;line-height:16px">Center</div>
<div class="btn" style="left:22px;top:747px;width:66px;height:19px;line-height:16px">Bitmap Fit</div>
<div class="btn" style="left:93px;top:747px;width:65px;height:19px;line-height:16px">Normal Align</div>
<div class="btn" style="left:22px;top:773px;width:66px;height:19px;line-height:16px">View Align</div>
<div class="btn" style="left:93px;top:773px;width:65px;height:19px;line-height:16px">Region Fit</div>
<div class="btn" style="left:22px;top:799px;width:66px;height:19px;line-height:16px">Reset</div>
<div class="btn" style="left:93px;top:799px;width:65px;height:19px;line-height:16px">Acquire</div>
<div class="grp" style="left:16px;top:844px;width:146px;height:61px"></div>
<div class="t" style="left:23px;top:836px;background:#c6c6c6;padding:0 2px">Display:</div>
<div class="a" style="left:7px;top:853px;width:166px;height:6px;background:#c6c6c6"></div>
<div class="a" style="left:0;top:857px;width:183px;height:1px;background:#7a7a7a"></div>
</div>
<div class="a" style="left:40px;top:900px;width:1057px;height:18px;background:#c6c6c6;border-bottom:1px solid #f4f4f4"></div>
<div class="a" style="left:41px;top:917px;width:1055px;height:1px;background:#9a9a9a"></div>
<div class="btn" style="left:41px;top:900px;width:15px;height:17px;border-color:#f4f4f4 #8a8a8a #8a8a8a #f4f4f4"></div>
<div class="a" style="left:57px;top:899px;width:124px;height:17px;background:#c6c6c6;border:1px solid;border-color:#f4f4f4 #222 #222 #f4f4f4;border-bottom-width:2px;text-align:center;line-height:14px;font-size:11px">0 / 100</div>
<div class="btn" style="left:182px;top:900px;width:15px;height:17px;border-color:#f4f4f4 #8a8a8a #8a8a8a #f4f4f4"></div>
<svg style="left:41px;top:900px" width="160" height="17"><path d="M9 5l-3.500 3.500l3.500 3.500M147 5l3.500 3.500l-3.500 3.500" fill="none" stroke="#000" stroke-width="1.200"/></svg>
<svg style="left:40px;top:918px" width="1057" height="28" viewBox="40 918 1057 28" font-family="Liberation Sans,sans-serif" font-size="11">
<rect x="90" y="919" width="9" height="25" fill="#9bb4cf" stroke="#5d7898" stroke-width="1"/>
<path d="M93.5 919v10M103.5 919v10M112.5 919v10M122.5 919v10M131.5 919v10M141.5 919v10M150.5 919v10M160.5 919v10M169.5 919v10M179.5 919v10M188.5 919v10M198.5 919v10M207.5 919v10M217.5 919v10M226.5 919v10M236.5 919v10M245.5 919v10M255.5 919v10M264.5 919v10M274.5 919v10M283.5 919v10M293.5 919v10M302.5 919v10M312.5 919v10M321.5 919v10M331.5 919v10M340.5 919v10M349.5 919v10M359.5 919v10M368.5 919v10M378.5 919v10M387.5 919v10M397.5 919v10M406.5 919v10M416.5 919v10M425.5 919v10M435.5 919v10M444.5 919v10M454.5 919v10M463.5 919v10M473.5 919v10M482.5 919v10M492.5 919v10M501.5 919v10M511.5 919v10M520.5 919v10M530.5 919v10M539.5 919v10M549.5 919v10M558.5 919v10M567.5 919v10M577.5 919v10M586.5 919v10M596.5 919v10M605.5 919v10M615.5 919v10M624.5 919v10M634.5 919v10M643.5 919v10M653.5 919v10M662.5 919v10M672.5 919v10M681.5 919v10M691.5 919v10M700.5 919v10M710.5 919v10M719.5 919v10M729.5 919v10M738.5 919v10M748.5 919v10M757.5 919v10M767.5 919v10M776.5 919v10M786.5 919v10M795.5 919v10M805.5 919v10M814.5 919v10M823.5 919v10M833.5 919v10M842.5 919v10M852.5 919v10M861.5 919v10M871.5 919v10M880.5 919v10M890.5 919v10M899.5 919v10M909.5 919v10M918.5 919v10M928.5 919v10M937.5 919v10M947.5 919v10M956.5 919v10M966.5 919v10M975.5 919v10M985.5 919v10M994.5 919v10M1004.5 919v10M1013.5 919v10M1023.5 919v10M1032.5 919v10M1041.5 919v10" stroke="#7c7c7c" stroke-width="1"/>
<path d="M93.5 919v26M141.5 919v26M188.5 919v26M236.5 919v26M283.5 919v26M331.5 919v26M378.5 919v26M425.5 919v26M473.5 919v26M520.5 919v26M567.5 919v26M615.5 919v26M662.5 919v26M710.5 919v26M757.5 919v26M805.5 919v26M852.5 919v26M899.5 919v26M947.5 919v26M994.5 919v26M1041.5 919v26" stroke="#8c8c8c" stroke-width="1"/>
<text x="94.5" y="942" text-anchor="middle" stroke="#c6c6c6" stroke-width="2.500" paint-order="stroke">0</text><text x="141.9" y="942" text-anchor="middle" stroke="#c6c6c6" stroke-width="2.500" paint-order="stroke">5</text><text x="189.3" y="942" text-anchor="middle" stroke="#c6c6c6" stroke-width="2.500" paint-order="stroke">10</text><text x="236.7" y="942" text-anchor="middle" stroke="#c6c6c6" stroke-width="2.500" paint-order="stroke">15</text><text x="284.1" y="942" text-anchor="middle" stroke="#c6c6c6" stroke-width="2.500" paint-order="stroke">20</text><text x="331.5" y="942" text-anchor="middle" stroke="#c6c6c6" stroke-width="2.500" paint-order="stroke">25</text><text x="378.9" y="942" text-anchor="middle" stroke="#c6c6c6" stroke-width="2.500" paint-order="stroke">30</text><text x="426.3" y="942" text-anchor="middle" stroke="#c6c6c6" stroke-width="2.500" paint-order="stroke">35</text><text x="473.7" y="942" text-anchor="middle" stroke="#c6c6c6" stroke-width="2.500" paint-order="stroke">40</text><text x="521.1" y="942" text-anchor="middle" stroke="#c6c6c6" stroke-width="2.500" paint-order="stroke">45</text><text x="568.5" y="942" text-anchor="middle" stroke="#c6c6c6" stroke-width="2.500" paint-order="stroke">50</text><text x="615.9" y="942" text-anchor="middle" stroke="#c6c6c6" stroke-width="2.500" paint-order="stroke">55</text><text x="663.3" y="942" text-anchor="middle" stroke="#c6c6c6" stroke-width="2.500" paint-order="stroke">60</text><text x="710.7" y="942" text-anchor="middle" stroke="#c6c6c6" stroke-width="2.500" paint-order="stroke">65</text><text x="758.1" y="942" text-anchor="middle" stroke="#c6c6c6" stroke-width="2.500" paint-order="stroke">70</text><text x="805.5" y="942" text-anchor="middle" stroke="#c6c6c6" stroke-width="2.500" paint-order="stroke">75</text><text x="852.9" y="942" text-anchor="middle" stroke="#c6c6c6" stroke-width="2.500" paint-order="stroke">80</text><text x="900.3" y="942" text-anchor="middle" stroke="#c6c6c6" stroke-width="2.500" paint-order="stroke">85</text><text x="947.7" y="942" text-anchor="middle" stroke="#c6c6c6" stroke-width="2.500" paint-order="stroke">90</text><text x="995.1" y="942" text-anchor="middle" stroke="#c6c6c6" stroke-width="2.500" paint-order="stroke">95</text><text x="1042.5" y="942" text-anchor="middle" stroke="#c6c6c6" stroke-width="2.500" paint-order="stroke">100</text>
<g fill="none" stroke="#000" stroke-width="1.200"><rect x="53.500" y="923.500" width="16" height="4"/><rect x="53.500" y="936.500" width="16" height="2.500"/><path d="M55 925.500c2-1.500 4 1.500 6 0s4 1.500 6 0M57.500 934v-4.500M55.500 931.500l2-2l2 2M65.500 929.500v4.500M63.500 932l2 2l2-2"/></g>
</svg>
<div class="a" style="left:40px;top:945px;width:1057px;height:1px;background:#9a9a9a"></div>
<div class="a" style="left:40px;top:946px;width:1057px;height:1px;background:#f0f0f0"></div>
<div class="a" style="left:2px;top:947px;width:96px;height:21px;background:#dfc8c8;border:1px solid;border-color:#8a8a8a #f4f4f4 #f4f4f4 #8a8a8a"></div>
<div class="a" style="left:2px;top:970px;width:96px;height:22px;background:#fff;border:1px solid;border-color:#8a8a8a #f4f4f4 #f4f4f4 #8a8a8a"></div>
<div class="sep" style="left:101px;top:946px;height:47px;width:4px;border-left-color:#f4f4f4;border-right-color:#8a8a8a"></div>
<div class="a" style="left:107px;top:948px;width:328px;height:21px;background:transparent;border:1px solid;border-color:#8a8a8a #f4f4f4 #f4f4f4 #8a8a8a"><div class="t" style="left:5px;top:2px;color:#000;font-size:11px;letter-spacing:-.1px">1 Object Selected</div></div>
<div class="a" style="left:107px;top:973px;width:627px;height:21px;background:transparent;border:1px solid;border-color:#8a8a8a #f4f4f4 #f4f4f4 #8a8a8a"><div class="t" style="left:5px;top:2px;color:#000;font-size:11px;letter-spacing:-.1px">Click and drag to rotate the view.&nbsp; Clicking in the tabs constrains the rotation</div></div>
<svg style="left:440px;top:946px" width="50" height="24"><rect x="5.500" y="12.500" width="8" height="7" fill="#c6c6c6" stroke="#000"/><path d="M7.500 12v-3a2 2 0 0 1 4 0v3M6 15h7M6 17h7" fill="none" stroke="#000"/><rect x="27.500" y="4.500" width="15" height="15" fill="none" stroke="#000" stroke-width="1.200"/><circle cx="35" cy="12" r="2" fill="#000"/><path d="M35 5v14M28 12h14" stroke="#000" stroke-width=".8"/></svg>
<div class="t" style="left:490px;top:950px;font-size:11px;letter-spacing:-.1px">X:</div>
<div class="t" style="left:572px;top:950px;font-size:11px;letter-spacing:-.1px">Y:</div>
<div class="t" style="left:654px;top:950px;font-size:11px;letter-spacing:-.1px">Z:</div>
<div class="a" style="left:502px;top:948px;width:56px;height:21px;background:#dcdcdc;border:2px solid;border-color:#111 #f4f4f4 #f4f4f4 #111"><div class="t" style="left:2px;top:1px;color:#808080;font-size:11px;letter-spacing:-.1px">99.633</div></div>
<div class="a" style="left:584px;top:948px;width:56px;height:21px;background:#dcdcdc;border:2px solid;border-color:#111 #f4f4f4 #f4f4f4 #111"><div class="t" style="left:2px;top:1px;color:#808080;font-size:11px;letter-spacing:-.1px">15.595</div></div>
<div class="a" style="left:666px;top:948px;width:56px;height:21px;background:#dcdcdc;border:2px solid;border-color:#111 #f4f4f4 #f4f4f4 #111"><div class="t" style="left:2px;top:1px;color:#808080;font-size:11px;letter-spacing:-.1px">0.0</div></div>
<div class="a" style="left:737px;top:948px;width:99px;height:21px;background:transparent;border:1px solid;border-color:#8a8a8a #f4f4f4 #f4f4f4 #8a8a8a"><div class="t" style="left:5px;top:2px;color:#000;font-size:11px;letter-spacing:-.1px">Grid = 10.0</div></div>
<div class="a" style="left:737px;top:973px;width:99px;height:21px;background:transparent;border:1px solid;border-color:#8a8a8a #f4f4f4 #f4f4f4 #8a8a8a"><div class="t" style="left:4px;top:2px;color:#000;font-size:11px;letter-spacing:-.1px">Add Time Tag</div></div>
<div class="btn" style="left:839px;top:947px;width:43px;height:44px"><svg style="left:8px;top:13px" width="28" height="14"><circle cx="6" cy="6" r="4.500" fill="none" stroke="#000" stroke-width="2"/><path d="M10 6h14M19 6v4M23 6v4" stroke="#000" stroke-width="2.200"/></svg></div>
<div class="btn" style="left:886px;top:947px;width:46px;height:21px;line-height:18px;font-size:11px;letter-spacing:-.1px">Auto Key</div>
<div class="btn" style="left:886px;top:969px;width:46px;height:21px;line-height:18px;font-size:11px;letter-spacing:-.1px">Set Key</div>
<div class="dd" style="left:936px;top:947px;width:114px;height:20px;border-width:2px;border-color:#555 #f4f4f4 #f4f4f4 #555;box-shadow:none"><div class="t" style="left:3px;top:1px;font-size:11px;letter-spacing:-.1px">Selected</div><div class="ar" style="width:16px"></div></div>
<svg style="left:936px;top:970px" width="26" height="22"><path d="M3 17h4l5-13h4l5 13h3" fill="none" stroke="#c03040" stroke-width="1.300"/><path d="M5 6h16M5 17h16" stroke="#a06080" stroke-width=".7"/><path d="M22 21l3 0l0-3z" fill="#000"/></svg>
<div class="btn" style="left:963px;top:970px;width:88px;height:21px;line-height:18px;font-size:11px;letter-spacing:-.1px">Key Filters...</div>
<svg style="left:1055px;top:946px" width="225" height="48" viewBox="1055 946 225 48">
<g fill="#000">
<path d="M1060 953h2v10h-2zM1069 953v10l-7-5zM1076 953v10l-7-5z"/>
<path d="M1095 953v10l-7-5zM1096.500 953h2v10h-2zM1099.500 953h2v10h-2z"/>
<rect x="1109.500" y="950.500" width="15" height="15" fill="none" stroke="#000" stroke-width="2"/><path d="M1114 954v8l6.500-4z"/><path d="M1125 969l3 0l0-3z"/>
<path d="M1132.500 953h2v10h-2zM1135.500 953h2v10h-2zM1139 953v10l7-5z"/>
<path d="M1157 953v10l7-5zM1164 953v10l7-5zM1171 953h2v10h-2z"/>
<path d="M1062 974h1.500v11h-1.500zM1073.500 974h1.500v11h-1.500zM1064 979.500l4-4v8zM1073 979.500l-4-4v8z"/>
<path d="M1150 977l3.500-4l3.500 4zM1150 983l3.500 4l3.500-4z"/>
</g>
<g stroke="#8a8a8a"><path d="M1082.500 950v16M1152.500 950v16M1179.500 950v16M1179.500 972v18"/></g>
<g stroke="#f0f0f0"><path d="M1083.500 950v16M1153.500 950v16M1180.500 950v16M1180.500 972v18"/></g>
<rect x="1084" y="971" width="62" height="19" fill="#e4e4e4"/><path d="M1084 990v-19h62" fill="none" stroke="#222" stroke-width="2"/><path d="M1084 990.500h62.500v-19" fill="none" stroke="#f8f8f8"/>
<text x="1089" y="985" font-size="11" font-family="Liberation Sans,sans-serif">0</text>
<g fill="none" stroke="#702020" stroke-width="1.200"><rect x="1164.500" y="974.500" width="11" height="11" fill="#eee"/><path d="M1164.500 977.500h11" /><circle cx="1174" cy="984" r="4.200" fill="#f4f4f4" stroke="#b02020"/><path d="M1174 981.500v2.500h2" stroke="#b02020"/></g>
<!-- nav icons -->
<g fill="none" stroke-width="1.400">
<circle cx="1192" cy="955" r="4.800" stroke="#223" fill="#dfe8ff"/><path d="M1195.500 959l5.500 6" stroke="#4038a8" stroke-width="2.400"/>
<g stroke="#b03030" stroke-width="1.200"><rect x="1214.500" y="950.500" width="10" height="10"/><path d="M1219.500 950.500v10M1214.500 955.500h10"/></g><circle cx="1213" cy="961" r="3.600" stroke="#223" fill="#dfe8ff"/><path d="M1215.500 964l3.500 4" stroke="#4038a8" stroke-width="2"/>
<g stroke="#283088" stroke-width="1.200"><path d="M1234 955v-4h4M1249 955v-4h-4M1234 962v4h4M1249 962v4h-4" stroke="#000"/><rect x="1237.500" y="955.500" width="8" height="8" fill="#e8e8f8"/><path d="M1237.500 955.500l3-3h8l-3 3M1248.500 952.500v8l-3 3"/></g>
<g stroke="#b03030" stroke-width="1.200"><rect x="1260.500" y="950.500" width="11" height="10"/><path d="M1266 950.500v10M1260.500 955.500h11"/></g><g stroke="#283088" stroke-width="1.200"><rect x="1256.500" y="958.500" width="7" height="7" fill="#e8e8f8"/><path d="M1256.500 958.500l3-3h7l-3 3M1266.500 955.500v7l-3 3"/></g><path d="M1272 968l3 0l0-3z" fill="#000"/>
<path d="M1186 973l18 8.500l-18 8.500l4-8.500z" stroke="#000" fill="#d8d8d8"/><path d="M1204 993l3 0l0-3z" fill="#000"/>
<path d="M1211 981c-2-3 1-4 2.500-2l1.500 2v-6c0-2 2.500-2 2.500 0v-1.500c0-2 2.500-2 2.500 0v1c0-2 2.500-2 2.500 0v1.500c0-2 2.500-2 2.500 0v7c0 4-2 6-6 6s-5-2-7-5z" stroke="#000" fill="#fff" stroke-width="1"/>
<rect x="1231.500" y="969.500" width="21" height="21" fill="#f6cf52" stroke="#fff3c0"/><circle cx="1241" cy="981.500" r="5.200" stroke="#000"/><path d="M1241 971v10.500l6 3M1241 981.500l-6 3" stroke="#283088" stroke-width="1.300"/><path d="M1241 970.500l-2 3h4zM1250 985l-3.500-.5l2-3z" fill="#000" stroke="none"/><path d="M1250 993l3 0l0-3z" fill="#000"/>
<g stroke="#283088" stroke-width="1.300"><rect x="1257.500" y="973.500" width="9" height="9"/><rect x="1262.500" y="978.500" width="9" height="9" fill="#c6c6c6"/></g><path d="M1259.500 975.500l6 6M1259.500 979v-3.500h3.500M1265.500 978v3.500h-3.500" stroke="#000" stroke-width="1"/>
</g>
</svg>

<div id="tk" class="a" style="left:0;top:994px;width:1280px;height:30px;background:linear-gradient(#c9d1a5 0,#b3bd8b 3px,#a7b27e 10px,#a3ae7a 22px,#96a16d 30px)">
<div class="a" style="left:0;top:0;width:97px;height:30px;border-radius:0 12px 12px 0;background:linear-gradient(#8fb27c 0,#5f9150 4px,#4d8040 12px,#46783b 22px,#3c6a33 30px);box-shadow:1px 0 2px #5a6a40"></div>
<svg style="left:10px;top:5px" width="22" height="20"><path d="M3 3c3-2 5-1 7 0l-1.500 6c-2-1-4-2-7 0z" fill="#e8502a"/><path d="M11.500 3.500c2 1 4 2 7 0l-1.500 6c-3 2-5 1-7 0z" fill="#7cc242"/><path d="M1 10.500c3-2 5-1 7 0l-1.500 6c-2-1-4-2-7 0z" fill="#3c8af0"/><path d="M9.500 11c2 1 4 2 7 0l-1.500 6c-3 2-5 1-7 0z" fill="#f8c420"/></svg>
<div class="t" style="left:35px;top:3px;font-size:18px;font-weight:bold;font-style:italic;color:#fff;line-height:22px;text-shadow:1px 1px 1px #2a4a20;letter-spacing:-.2px">start</div>
<svg style="left:105px;top:4px" width="90" height="24">
<rect x="5.500" y="3.500" width="15" height="15" fill="#18a038" stroke="#e8f4e8" stroke-width="1"/><path d="M10 6.500v8M10 12c0 3 5 3 5 0v-5.500M15 14.500v-2" stroke="#fff" stroke-width="1.800" fill="none"/>
<circle cx="37" cy="12" r="7" fill="#3a9ae8"/><path d="M32.500 12.500c0-5 9-5 9 0h-9c0 3 5 4 8 2" fill="none" stroke="#fff" stroke-width="2"/><path d="M28 17c2-8 12-14 17-11" fill="none" stroke="#f0c020" stroke-width="1.600"/>
<circle cx="58" cy="12" r="7.500" fill="#e86a18"/><circle cx="59.500" cy="10" r="4" fill="#3a50b8"/><path d="M51 10c1-5 7-7 11-4c-4 0-5 3-3 5c-3 0-4 3-2 5c-3 0-6-2-6-6z" fill="#f0901c"/>
<path d="M77 5l3 3l-3 3M81.500 5l3 3l-3 3" fill="none" stroke="#222" stroke-width="1.400"/>
</svg>
<!-- tray -->
<div class="a" style="left:1166px;top:0;width:114px;height:30px;background:linear-gradient(#f6f1cf 0,#ece6b8 4px,#e9e3b2 22px,#ddd6a0 30px);border-left:1px solid #c8c89a"></div>
<div class="a" style="left:1158px;top:6px;width:19px;height:19px;border-radius:50%;background:radial-gradient(circle at 40% 35%,#d8a888,#a86848 60%,#804828);box-shadow:0 0 0 1px #e8d8c0"></div>
<svg style="left:1158px;top:6px" width="19" height="19"><path d="M11 5l-4.500 4.500l4.500 4.500" fill="none" stroke="#fff" stroke-width="2.200"/></svg>
<div class="t" style="left:1184px;top:8px;font-weight:bold;font-size:11px;letter-spacing:.3px">0&nbsp; 56</div>
<div class="t" style="left:1223px;top:8px;font-size:11px">6:35 PM</div>
<div class="a" style="left:199px;top:3px;width:117px;height:25px;border-radius:3px;background:linear-gradient(#e4e9cc 0,#cfd6b1 3px,#c6cea5 10px,#bfc79d 22px,#aeb78a 26px);border:1px solid #eef1dc;box-shadow:0 0 0 1px #7f8a63">
<svg style="left:9px;top:4px" width="17" height="17"><circle cx="8" cy="8" r="6.500" fill="#e87818" stroke="#7a3a08"/><circle cx="8" cy="8" r="2.500" fill="#f8e8c0" stroke="#7a3a08"/><path d="M8 0v3M8 13v3M0 8h3M13 8h3M2.500 2.500l2 2M11.500 11.500l2 2M13.500 2.500l-2 2M2.500 13.500l2-2" stroke="#7a3a08" stroke-width="1.500"/></svg>
<div class="t" style="left:29px;top:5px;color:#000;font-size:11px"><b>2</b> RivaTune...</div>
<div class="a" style="right:6px;top:11px;border:3.500px solid transparent;border-top:4px solid #222;border-bottom:0"></div>
</div>
<div class="a" style="left:318px;top:3px;width:117px;height:25px;border-radius:3px;background:linear-gradient(#86926a 0,#8e9a72 4px,#8f9b73 24px,#98a47c 26px);border:1px solid #6f7a55;box-shadow:0 0 0 1px #5f6a45">
<svg style="left:9px;top:4px" width="17" height="17"><rect width="16" height="16" fill="#173a6a"/><rect x="1" y="1" width="14" height="14" fill="#2a63a6"/><circle cx="8" cy="8" r="5" fill="none" stroke="#e8f4ff" stroke-width="2"/><path d="M4.500 9c1.500-3 5.500-3 6.500 0c-1 2-4 2-4.500 0" fill="none" stroke="#e8f4ff" stroke-width="1.500"/></svg>
<div class="t" style="left:29px;top:5px;color:#fff;font-size:11px">city_flying.m...</div>
</div>
<div class="a" style="left:438px;top:3px;width:116px;height:25px;border-radius:3px;background:linear-gradient(#e4e9cc 0,#cfd6b1 3px,#c6cea5 10px,#bfc79d 22px,#aeb78a 26px);border:1px solid #eef1dc;box-shadow:0 0 0 1px #7f8a63">
<svg style="left:9px;top:4px" width="17" height="17"><path d="M1 3h5l1.500 2h7.500v9h-14z" fill="#f0c850" stroke="#a07818"/><path d="M1 6h14" stroke="#f8e8a0"/></svg>
<div class="t" style="left:29px;top:5px;color:#000;font-size:11px"><b>5</b> Windows ...</div>
<div class="a" style="right:6px;top:11px;border:3.500px solid transparent;border-top:4px solid #222;border-bottom:0"></div>
</div>
<div class="a" style="left:557px;top:3px;width:117px;height:25px;border-radius:3px;background:linear-gradient(#e4e9cc 0,#cfd6b1 3px,#c6cea5 10px,#bfc79d 22px,#aeb78a 26px);border:1px solid #eef1dc;box-shadow:0 0 0 1px #7f8a63">
<svg style="left:9px;top:4px" width="17" height="17"><rect x="2" y="2" width="11" height="13" fill="#f4f4f4" stroke="#8a8a8a"/><path d="M4 5h7M4 8h7M4 11h5" stroke="#8aa"/><path d="M15 1l-7 8l-1 3l3-1l7-8z" fill="#f0c040" stroke="#806010" stroke-width=".8"/></svg>
<div class="t" style="left:29px;top:5px;color:#000;font-size:11px">C:\Program F...</div>
</div>
<div class="a" style="left:677px;top:3px;width:117px;height:25px;border-radius:3px;background:linear-gradient(#e4e9cc 0,#cfd6b1 3px,#c6cea5 10px,#bfc79d 22px,#aeb78a 26px);border:1px solid #eef1dc;box-shadow:0 0 0 1px #7f8a63">
<svg style="left:9px;top:4px" width="17" height="17"><path d="M1 2l3 9l2-6l2 6l3-9" fill="none" stroke="#c01818" stroke-width="2.200"/><text x="6" y="15" font-size="10" font-weight="bold" fill="#18a018" font-family="Liberation Sans,sans-serif">3</text><path d="M10 8h3c3 0 3 7 0 7h-3z" fill="#1828c0"/></svg>
<div class="t" style="left:29px;top:5px;color:#000;font-size:11px">mp_city.w3d ...</div>
</div>
<div class="a" style="left:797px;top:3px;width:116px;height:25px;border-radius:3px;background:linear-gradient(#e4e9cc 0,#cfd6b1 3px,#c6cea5 10px,#bfc79d 22px,#aeb78a 26px);border:1px solid #eef1dc;box-shadow:0 0 0 1px #7f8a63">
<svg style="left:9px;top:4px" width="17" height="17"><circle cx="8" cy="8" r="7.500" fill="#f0c020" stroke="#806010"/><circle cx="8" cy="8" r="2.200" fill="#fff8d0" stroke="#806010"/><path d="M8 .5v5M8 10.500v5" stroke="#f8e890"/></svg>
<div class="t" style="left:29px;top:5px;color:#000;font-size:11px">PowerISO - E...</div>
</div>
<div class="a" style="left:916px;top:3px;width:118px;height:25px;border-radius:3px;background:linear-gradient(#e4e9cc 0,#cfd6b1 3px,#c6cea5 10px,#bfc79d 22px,#aeb78a 26px);border:1px solid #eef1dc;box-shadow:0 0 0 1px #7f8a63">
<svg style="left:9px;top:4px" width="17" height="17"><rect width="16" height="16" fill="#1c4a9c"/><text x="2" y="12" font-size="10" font-weight="bold" fill="#fff" font-family="Liberation Sans,sans-serif">Ps</text></svg>
<div class="t" style="left:29px;top:5px;color:#000;font-size:11px">Adobe Photo...</div>
</div>
<div class="a" style="left:1037px;top:3px;width:118px;height:25px;border-radius:3px;background:linear-gradient(#e4e9cc 0,#cfd6b1 3px,#c6cea5 10px,#bfc79d 22px,#aeb78a 26px);border:1px solid #eef1dc;box-shadow:0 0 0 1px #7f8a63">
<svg style="left:9px;top:4px" width="17" height="17"><circle cx="8" cy="8.500" r="6.500" fill="#3a9ae8"/><path d="M4 9c0-5 8.500-5 8.500 0h-8.500c0 3 5 4 7.500 2" fill="none" stroke="#fff" stroke-width="1.900"/><path d="M0 13c2-8 11-13 16-10" fill="none" stroke="#f0c020" stroke-width="1.500"/></svg>
<div class="t" style="left:29px;top:5px;color:#000;font-size:11px">road uvw 3d...</div>
</div>
</div>
</body></html>
